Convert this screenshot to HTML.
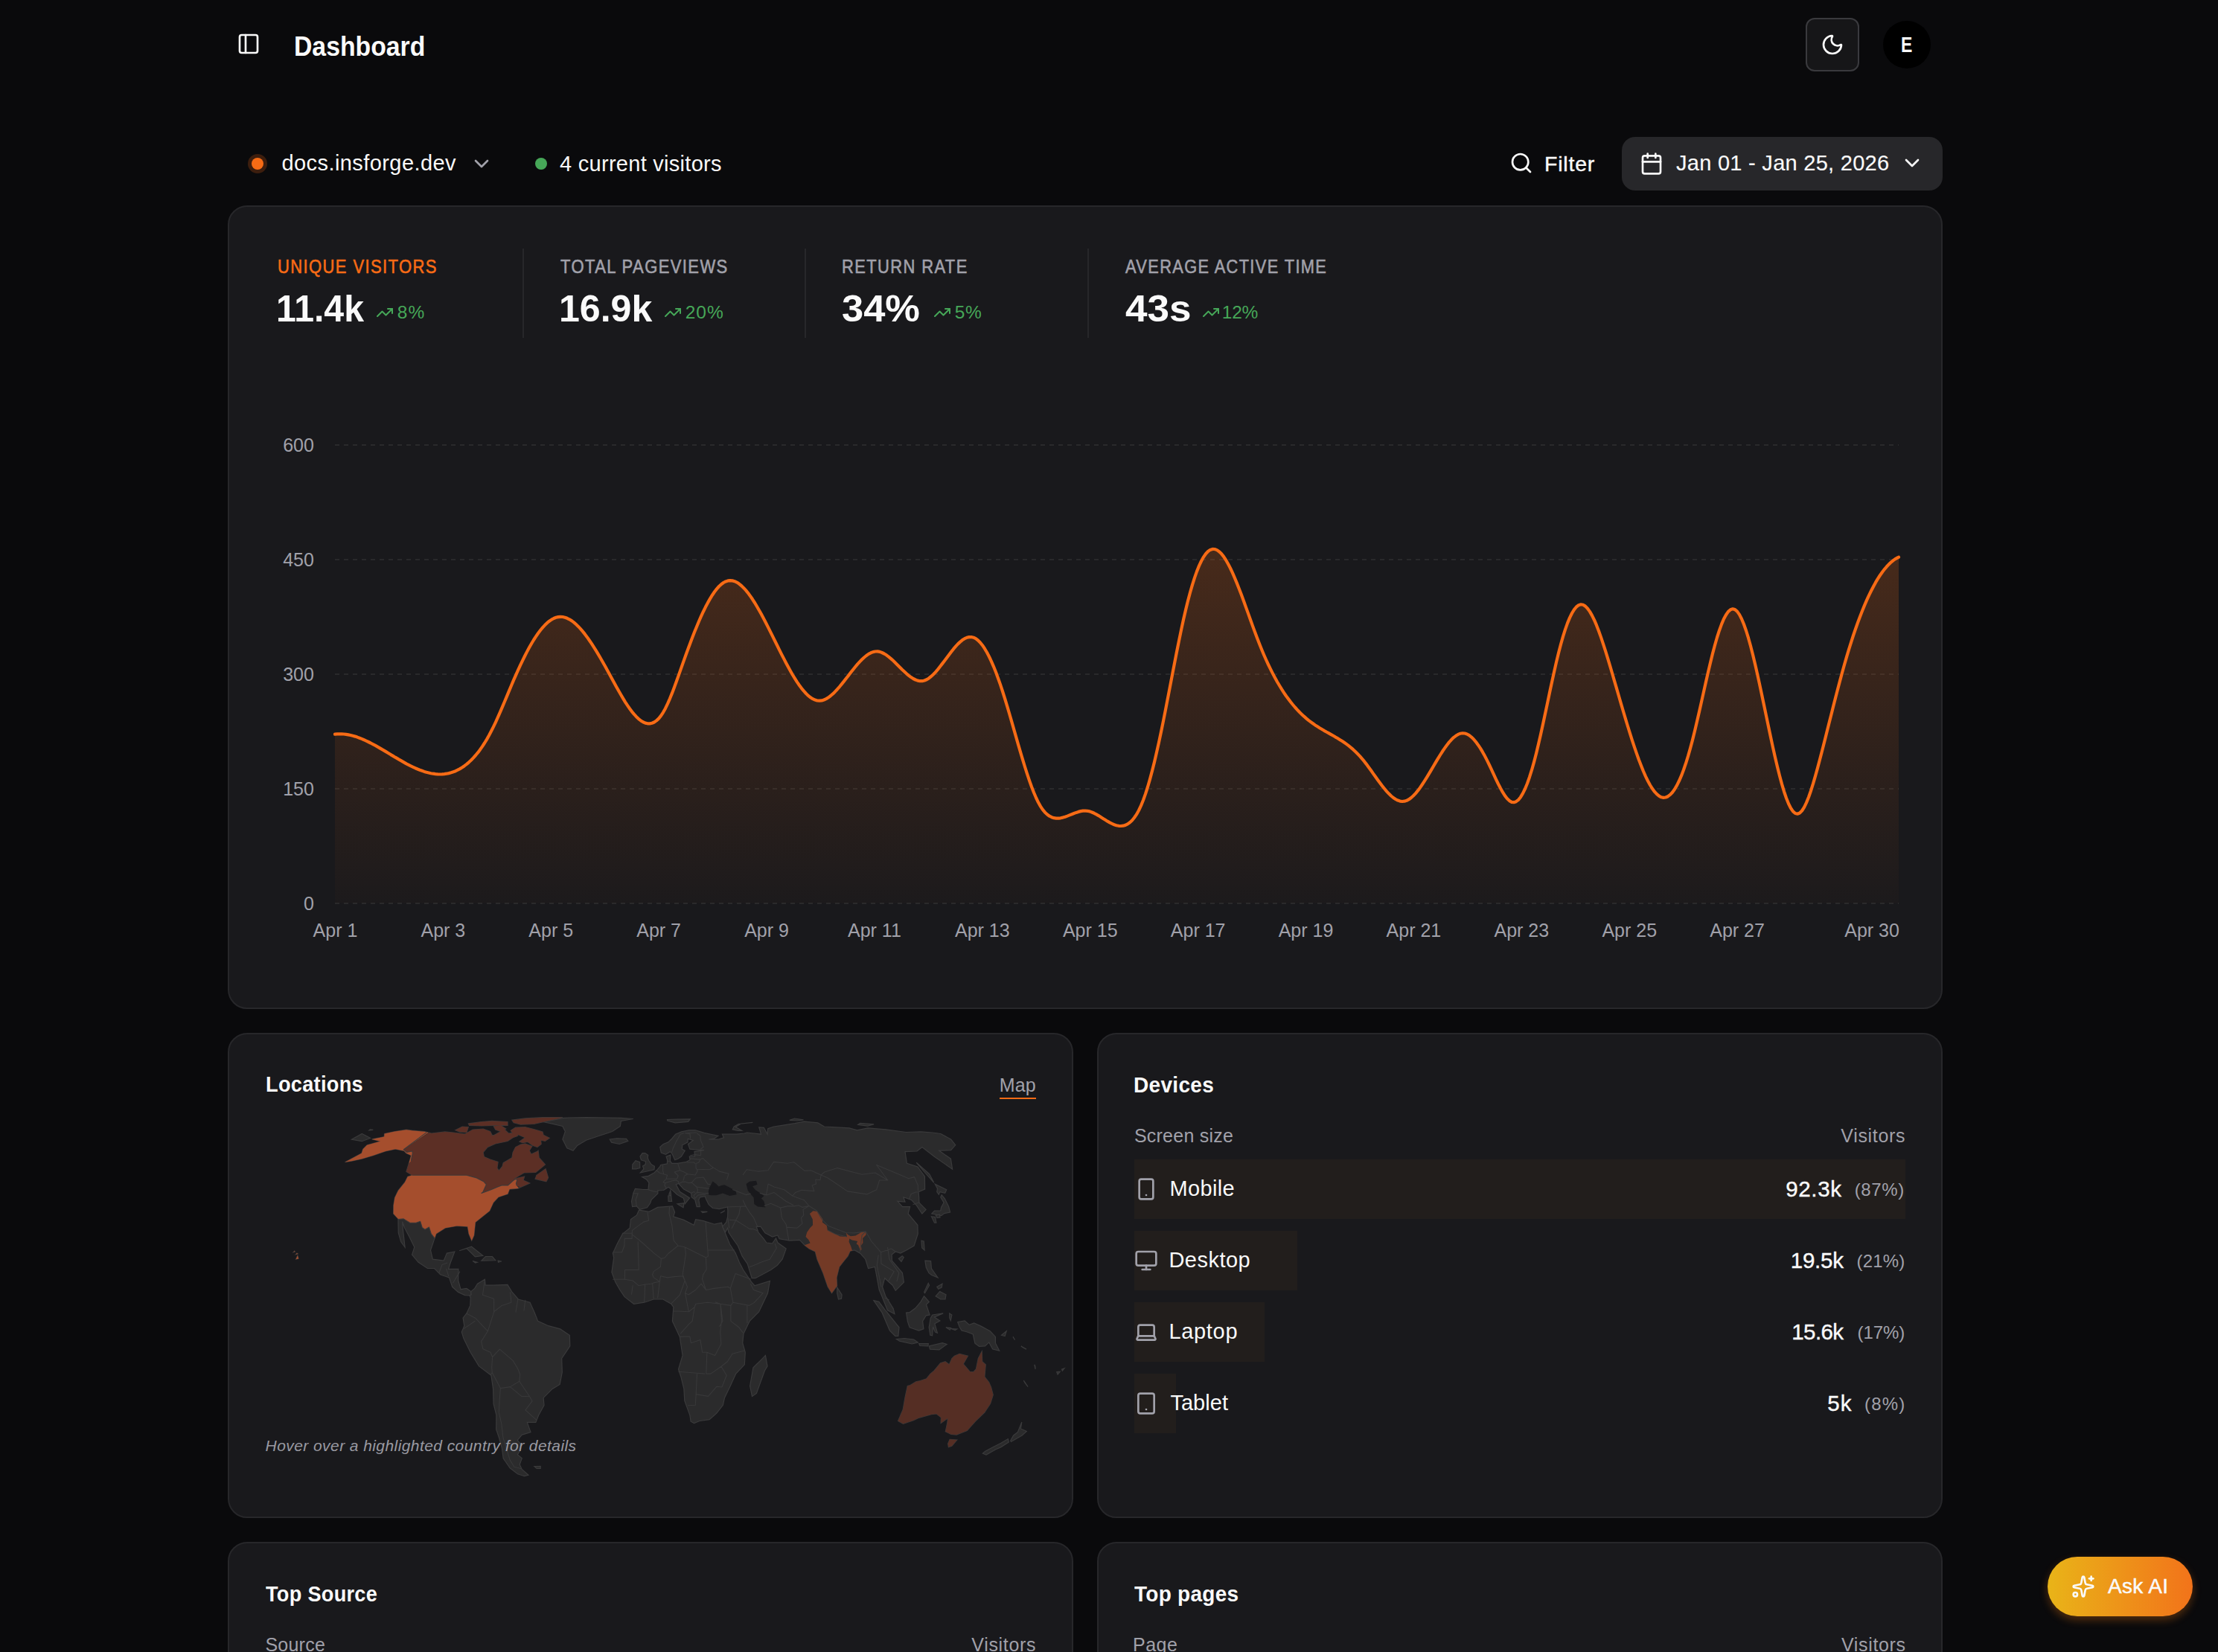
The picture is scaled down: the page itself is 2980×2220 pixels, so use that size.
<!DOCTYPE html>
<html><head><meta charset="utf-8"><title>Dashboard</title>
<style>
html,body{margin:0;padding:0}
body{width:2980px;height:2220px;background:#0a0a0c;position:relative;overflow:hidden;font-family:'Liberation Sans', sans-serif}
.t{position:absolute;white-space:nowrap;line-height:1}
.card{position:absolute;box-sizing:border-box;background:#19191c;border:2px solid #27272a;border-radius:26px}
@media (max-width:2000px){html{zoom:0.5}}
</style></head><body>
<svg style="position:absolute;left:318.00px;top:42.50px;" width="32" height="32" viewBox="0 0 24 24" fill="none" stroke="#fafafa" stroke-width="2" stroke-linecap="round" stroke-linejoin="round"><rect width="18" height="18" x="3" y="3" rx="2"/><path d="M9 3v18"/></svg>
<div style="position:absolute;left:2426px;top:24px;width:72px;height:72px;box-sizing:border-box;border:2px solid #3a3a3e;background:#161618;border-radius:12px"></div>
<svg style="position:absolute;left:2446.10px;top:43.80px;" width="32" height="32" viewBox="0 0 24 24" fill="none" stroke="#fafafa" stroke-width="2" stroke-linecap="round" stroke-linejoin="round"><path d="M20.985 12.486a9 9 0 1 1-9.473-9.472c.405-.022.617.46.402.803a6 6 0 0 0 8.268 8.268c.344-.215.825-.004.803.401"/></svg>
<div style="position:absolute;left:2530px;top:28px;width:64px;height:64px;border-radius:50%;background:#000"></div>
<div style="position:absolute;left:333px;top:207px;width:26px;height:26px;border-radius:50%;background:rgba(247,107,21,0.22)"></div>
<div style="position:absolute;left:338px;top:212px;width:16px;height:16px;border-radius:50%;background:#f76b15"></div>
<svg style="position:absolute;left:631.10px;top:203.80px;" width="32" height="32" viewBox="0 0 24 24" fill="none" stroke="#a1a1aa" stroke-width="2" stroke-linecap="round" stroke-linejoin="round"><path d="m6 9 6 6 6-6"/></svg>
<div style="position:absolute;left:719px;top:212px;width:16px;height:16px;border-radius:50%;background:#46a758"></div>
<svg style="position:absolute;left:2027.50px;top:203.30px;" width="32" height="32" viewBox="0 0 24 24" fill="none" stroke="#fafafa" stroke-width="2" stroke-linecap="round" stroke-linejoin="round"><path d="m21 21-4.34-4.34"/><circle cx="11" cy="11" r="8"/></svg>
<div style="position:absolute;left:2179px;top:184px;width:431px;height:72px;background:#27272a;border-radius:18px"></div>
<svg style="position:absolute;left:2202.80px;top:204.10px;" width="32" height="32" viewBox="0 0 24 24" fill="none" stroke="#fafafa" stroke-width="2" stroke-linecap="round" stroke-linejoin="round"><path d="M8 2v4"/><path d="M16 2v4"/><rect width="18" height="18" x="3" y="4" rx="2"/><path d="M3 10h18"/></svg>
<svg style="position:absolute;left:2553.30px;top:203.30px;" width="32" height="32" viewBox="0 0 24 24" fill="none" stroke="#fafafa" stroke-width="2" stroke-linecap="round" stroke-linejoin="round"><path d="m6 9 6 6 6-6"/></svg>
<div class=card style="left:306px;top:276px;width:2304px;height:1080px"></div>
<div style="position:absolute;left:702px;top:334px;width:2px;height:120px;background:#27272a"></div>
<div style="position:absolute;left:1081px;top:334px;width:2px;height:120px;background:#27272a"></div>
<div style="position:absolute;left:1461px;top:334px;width:2px;height:120px;background:#27272a"></div>
<svg style="position:absolute;left:505.00px;top:408.00px;" width="24" height="24" viewBox="0 0 24 24" fill="none" stroke="#46a758" stroke-width="2" stroke-linecap="round" stroke-linejoin="round"><path d="M16 7h6v6"/><path d="m22 7-8.5 8.5-5-5L2 17"/></svg>
<svg style="position:absolute;left:892.00px;top:408.00px;" width="24" height="24" viewBox="0 0 24 24" fill="none" stroke="#46a758" stroke-width="2" stroke-linecap="round" stroke-linejoin="round"><path d="M16 7h6v6"/><path d="m22 7-8.5 8.5-5-5L2 17"/></svg>
<svg style="position:absolute;left:1254.00px;top:408.00px;" width="24" height="24" viewBox="0 0 24 24" fill="none" stroke="#46a758" stroke-width="2" stroke-linecap="round" stroke-linejoin="round"><path d="M16 7h6v6"/><path d="m22 7-8.5 8.5-5-5L2 17"/></svg>
<svg style="position:absolute;left:1615.30px;top:408.00px;" width="24" height="24" viewBox="0 0 24 24" fill="none" stroke="#46a758" stroke-width="2" stroke-linecap="round" stroke-linejoin="round"><path d="M16 7h6v6"/><path d="m22 7-8.5 8.5-5-5L2 17"/></svg>
<svg style="position:absolute;left:0;top:0" width="2980" height="1400" viewBox="0 0 2980 1400">
<defs><linearGradient id="ag" gradientUnits="userSpaceOnUse" x1="0" y1="737" x2="0" y2="1214"><stop offset="0" stop-color="#f76b15" stop-opacity="0.21"/><stop offset="1" stop-color="#f76b15" stop-opacity="0.015"/></linearGradient></defs>
<line x1="450" x2="2551" y1="598" y2="598" stroke="#29292b" stroke-width="2" stroke-dasharray="6 6"/>
<line x1="450" x2="2551" y1="752" y2="752" stroke="#29292b" stroke-width="2" stroke-dasharray="6 6"/>
<line x1="450" x2="2551" y1="906" y2="906" stroke="#29292b" stroke-width="2" stroke-dasharray="6 6"/>
<line x1="450" x2="2551" y1="1060" y2="1060" stroke="#29292b" stroke-width="2" stroke-dasharray="6 6"/>
<line x1="450" x2="2551" y1="1214" y2="1214" stroke="#29292b" stroke-width="2" stroke-dasharray="6 6"/>
<path d="M450.0,986.7 L453.0,986.4 L456.0,986.3 L459.0,986.3 L462.0,986.5 L465.0,986.9 L468.0,987.4 L471.0,988.0 L474.0,988.8 L477.0,989.6 L480.0,990.6 L483.0,991.7 L486.0,992.9 L489.0,994.2 L492.0,995.6 L495.0,997.0 L498.0,998.5 L501.0,1000.1 L504.0,1001.7 L507.0,1003.4 L510.0,1005.1 L513.0,1006.9 L516.0,1008.6 L519.0,1010.4 L522.0,1012.2 L525.0,1014.1 L528.0,1015.9 L531.0,1017.7 L534.0,1019.4 L537.0,1021.2 L540.0,1022.9 L543.0,1024.6 L546.0,1026.3 L549.0,1027.8 L552.0,1029.4 L555.0,1030.8 L558.0,1032.2 L561.0,1033.5 L564.0,1034.7 L567.0,1035.8 L570.0,1036.9 L573.0,1037.8 L576.0,1038.5 L579.0,1039.2 L582.0,1039.7 L585.0,1040.1 L588.0,1040.4 L591.0,1040.5 L594.0,1040.4 L597.0,1040.1 L600.0,1039.7 L603.0,1039.1 L606.0,1038.3 L609.0,1037.3 L612.0,1036.2 L615.0,1034.7 L618.0,1033.1 L621.0,1031.3 L624.0,1029.2 L627.0,1026.9 L630.0,1024.3 L633.0,1021.5 L636.0,1018.4 L639.0,1015.0 L642.0,1011.4 L645.0,1007.4 L648.0,1003.1 L651.0,998.5 L654.0,993.6 L657.0,988.3 L660.0,982.6 L663.0,976.6 L666.0,970.3 L669.0,963.7 L672.0,956.8 L675.0,949.8 L678.0,942.7 L681.0,935.6 L684.0,928.4 L687.0,921.2 L690.0,914.2 L693.0,907.3 L696.0,900.6 L699.0,894.1 L702.0,887.8 L705.0,881.7 L708.0,875.9 L711.0,870.3 L714.0,865.0 L717.0,860.0 L720.0,855.4 L723.0,851.0 L726.0,847.0 L729.0,843.4 L732.0,840.1 L735.0,837.2 L738.0,834.7 L741.0,832.6 L744.0,831.0 L747.0,829.8 L750.0,829.1 L753.0,828.8 L756.0,829.0 L759.0,829.7 L762.0,830.8 L765.0,832.3 L768.0,834.1 L771.0,836.4 L774.0,839.0 L777.0,841.9 L780.0,845.1 L783.0,848.6 L786.0,852.4 L789.0,856.4 L792.0,860.7 L795.0,865.1 L798.0,869.8 L801.0,874.6 L804.0,879.6 L807.0,884.8 L810.0,890.0 L813.0,895.3 L816.0,900.8 L819.0,906.2 L822.0,911.7 L825.0,917.2 L828.0,922.7 L831.0,928.1 L834.0,933.3 L837.0,938.4 L840.0,943.3 L843.0,947.9 L846.0,952.2 L849.0,956.3 L852.0,959.9 L855.0,963.2 L858.0,966.1 L861.0,968.4 L864.0,970.3 L867.0,971.6 L870.0,972.3 L873.0,972.4 L876.0,971.8 L879.0,970.5 L882.0,968.4 L885.0,965.6 L888.0,961.9 L891.0,957.3 L894.0,951.9 L897.0,945.6 L900.0,938.8 L903.0,931.4 L906.0,923.5 L909.0,915.3 L912.0,906.9 L915.0,898.4 L918.0,889.9 L921.0,881.5 L924.0,873.3 L927.0,865.2 L930.0,857.3 L933.0,849.6 L936.0,842.2 L939.0,835.0 L942.0,828.2 L945.0,821.7 L948.0,815.6 L951.0,809.9 L954.0,804.6 L957.0,799.7 L960.0,795.3 L963.0,791.4 L966.0,788.0 L969.0,785.2 L972.0,783.0 L975.0,781.4 L978.0,780.4 L981.0,780.1 L984.0,780.4 L987.0,781.2 L990.0,782.6 L993.0,784.6 L996.0,787.0 L999.0,789.9 L1002.0,793.2 L1005.0,796.8 L1008.0,800.9 L1011.0,805.3 L1014.0,810.0 L1017.0,815.0 L1020.0,820.2 L1023.0,825.6 L1026.0,831.2 L1029.0,837.0 L1032.0,842.9 L1035.0,848.9 L1038.0,854.9 L1041.0,861.0 L1044.0,867.0 L1047.0,873.1 L1050.0,879.1 L1053.0,884.9 L1056.0,890.7 L1059.0,896.3 L1062.0,901.7 L1065.0,907.0 L1068.0,911.9 L1071.0,916.6 L1074.0,921.0 L1077.0,925.1 L1080.0,928.7 L1083.0,932.0 L1086.0,934.9 L1089.0,937.3 L1092.0,939.2 L1095.0,940.6 L1098.0,941.5 L1101.0,941.7 L1104.0,941.4 L1107.0,940.5 L1110.0,939.1 L1113.0,937.3 L1116.0,935.0 L1119.0,932.4 L1122.0,929.4 L1125.0,926.2 L1128.0,922.8 L1131.0,919.1 L1134.0,915.4 L1137.0,911.5 L1140.0,907.7 L1143.0,903.8 L1146.0,900.0 L1149.0,896.3 L1152.0,892.7 L1155.0,889.4 L1158.0,886.3 L1161.0,883.5 L1164.0,881.0 L1167.0,878.9 L1170.0,877.3 L1173.0,876.1 L1176.0,875.5 L1179.0,875.4 L1182.0,875.9 L1185.0,877.0 L1188.0,878.5 L1191.0,880.3 L1194.0,882.6 L1197.0,885.1 L1200.0,887.8 L1203.0,890.7 L1206.0,893.7 L1209.0,896.7 L1212.0,899.7 L1215.0,902.5 L1218.0,905.3 L1221.0,907.8 L1224.0,910.1 L1227.0,912.0 L1230.0,913.5 L1233.0,914.6 L1236.0,915.2 L1239.0,915.2 L1242.0,914.5 L1245.0,913.3 L1248.0,911.4 L1251.0,909.0 L1254.0,906.2 L1257.0,903.1 L1260.0,899.6 L1263.0,895.8 L1266.0,891.9 L1269.0,887.9 L1272.0,883.9 L1275.0,879.9 L1278.0,876.0 L1281.0,872.2 L1284.0,868.7 L1287.0,865.4 L1290.0,862.6 L1293.0,860.1 L1296.0,858.2 L1299.0,856.8 L1302.0,856.1 L1305.0,856.0 L1308.0,856.7 L1311.0,858.2 L1314.0,860.5 L1317.0,863.5 L1320.0,867.2 L1323.0,871.7 L1326.0,876.8 L1329.0,882.5 L1332.0,888.9 L1335.0,895.8 L1338.0,903.3 L1341.0,911.4 L1344.0,919.9 L1347.0,929.0 L1350.0,938.5 L1353.0,948.4 L1356.0,958.5 L1359.0,968.9 L1362.0,979.4 L1365.0,989.9 L1368.0,1000.3 L1371.0,1010.6 L1374.0,1020.7 L1377.0,1030.5 L1380.0,1039.9 L1383.0,1048.9 L1386.0,1057.3 L1389.0,1065.0 L1392.0,1072.0 L1395.0,1078.3 L1398.0,1083.6 L1401.0,1088.1 L1404.0,1091.7 L1407.0,1094.5 L1410.0,1096.7 L1413.0,1098.2 L1416.0,1099.2 L1419.0,1099.6 L1422.0,1099.7 L1425.0,1099.3 L1428.0,1098.6 L1431.0,1097.7 L1434.0,1096.6 L1437.0,1095.4 L1440.0,1094.2 L1443.0,1093.0 L1446.0,1091.9 L1449.0,1090.9 L1452.0,1090.1 L1455.0,1089.6 L1458.0,1089.5 L1461.0,1089.8 L1464.0,1090.4 L1467.0,1091.5 L1470.0,1092.8 L1473.0,1094.4 L1476.0,1096.1 L1479.0,1098.0 L1482.0,1099.9 L1485.0,1101.8 L1488.0,1103.7 L1491.0,1105.4 L1494.0,1106.9 L1497.0,1108.2 L1500.0,1109.2 L1503.0,1109.8 L1506.0,1110.0 L1509.0,1109.7 L1512.0,1108.9 L1515.0,1107.4 L1518.0,1105.3 L1521.0,1102.5 L1524.0,1098.8 L1527.0,1094.4 L1530.0,1089.0 L1533.0,1082.6 L1536.0,1075.3 L1539.0,1066.9 L1542.0,1057.5 L1545.0,1047.1 L1548.0,1035.9 L1551.0,1023.9 L1554.0,1011.1 L1557.0,997.6 L1560.0,983.5 L1563.0,968.8 L1566.0,953.7 L1569.0,938.2 L1572.0,922.6 L1575.0,906.9 L1578.0,891.4 L1581.0,876.0 L1584.0,861.1 L1587.0,846.6 L1590.0,832.8 L1593.0,819.7 L1596.0,807.5 L1599.0,796.2 L1602.0,785.8 L1605.0,776.4 L1608.0,767.9 L1611.0,760.4 L1614.0,754.0 L1617.0,748.6 L1620.0,744.2 L1623.0,741.0 L1626.0,738.9 L1629.0,737.9 L1632.0,738.0 L1635.0,739.1 L1638.0,741.2 L1641.0,744.1 L1644.0,747.9 L1647.0,752.5 L1650.0,757.7 L1653.0,763.5 L1656.0,769.9 L1659.0,776.8 L1662.0,784.1 L1665.0,791.7 L1668.0,799.6 L1671.0,807.8 L1674.0,816.1 L1677.0,824.4 L1680.0,832.8 L1683.0,841.1 L1686.0,849.3 L1689.0,857.3 L1692.0,865.1 L1695.0,872.5 L1698.0,879.7 L1701.0,886.5 L1704.0,893.0 L1707.0,899.2 L1710.0,905.1 L1713.0,910.8 L1716.0,916.2 L1719.0,921.3 L1722.0,926.2 L1725.0,930.8 L1728.0,935.2 L1731.0,939.3 L1734.0,943.3 L1737.0,947.0 L1740.0,950.5 L1743.0,953.8 L1746.0,957.0 L1749.0,959.9 L1752.0,962.7 L1755.0,965.3 L1758.0,967.8 L1761.0,970.1 L1764.0,972.3 L1767.0,974.4 L1770.0,976.3 L1773.0,978.2 L1776.0,980.0 L1779.0,981.8 L1782.0,983.5 L1785.0,985.1 L1788.0,986.8 L1791.0,988.5 L1794.0,990.3 L1797.0,992.0 L1800.0,993.9 L1803.0,995.8 L1806.0,997.8 L1809.0,999.9 L1812.0,1002.2 L1815.0,1004.6 L1818.0,1007.2 L1821.0,1010.0 L1824.0,1013.0 L1827.0,1016.1 L1830.0,1019.6 L1833.0,1023.2 L1836.0,1027.1 L1839.0,1031.2 L1842.0,1035.3 L1845.0,1039.6 L1848.0,1043.8 L1851.0,1048.0 L1854.0,1052.1 L1857.0,1056.1 L1860.0,1059.8 L1863.0,1063.4 L1866.0,1066.6 L1869.0,1069.5 L1872.0,1072.0 L1875.0,1074.0 L1878.0,1075.6 L1881.0,1076.6 L1884.0,1077.0 L1887.0,1076.7 L1890.0,1075.8 L1893.0,1074.2 L1896.0,1072.0 L1899.0,1069.3 L1902.0,1066.1 L1905.0,1062.4 L1908.0,1058.4 L1911.0,1054.0 L1914.0,1049.4 L1917.0,1044.6 L1920.0,1039.6 L1923.0,1034.6 L1926.0,1029.5 L1929.0,1024.4 L1932.0,1019.4 L1935.0,1014.5 L1938.0,1009.8 L1941.0,1005.4 L1944.0,1001.2 L1947.0,997.4 L1950.0,994.1 L1953.0,991.1 L1956.0,988.8 L1959.0,986.9 L1962.0,985.8 L1965.0,985.3 L1968.0,985.5 L1971.0,986.5 L1974.0,988.2 L1977.0,990.6 L1980.0,993.5 L1983.0,997.1 L1986.0,1001.2 L1989.0,1005.7 L1992.0,1010.7 L1995.0,1016.1 L1998.0,1021.9 L2001.0,1028.0 L2004.0,1034.4 L2007.0,1040.8 L2010.0,1047.3 L2013.0,1053.5 L2016.0,1059.3 L2019.0,1064.7 L2022.0,1069.4 L2025.0,1073.2 L2028.0,1076.1 L2031.0,1077.8 L2034.0,1078.2 L2037.0,1077.2 L2040.0,1074.9 L2043.0,1071.2 L2046.0,1066.2 L2049.0,1060.0 L2052.0,1052.7 L2055.0,1044.2 L2058.0,1034.7 L2061.0,1024.1 L2064.0,1012.6 L2067.0,1000.1 L2070.0,987.0 L2073.0,973.3 L2076.0,959.3 L2079.0,945.1 L2082.0,930.8 L2085.0,916.8 L2088.0,903.1 L2091.0,889.9 L2094.0,877.5 L2097.0,866.0 L2100.0,855.4 L2103.0,845.9 L2106.0,837.4 L2109.0,830.1 L2112.0,824.0 L2115.0,819.1 L2118.0,815.5 L2121.0,813.2 L2124.0,812.3 L2127.0,812.8 L2130.0,814.6 L2133.0,817.7 L2136.0,821.9 L2139.0,827.1 L2142.0,833.2 L2145.0,840.2 L2148.0,848.0 L2151.0,856.4 L2154.0,865.3 L2157.0,874.7 L2160.0,884.4 L2163.0,894.4 L2166.0,904.5 L2169.0,914.8 L2172.0,925.1 L2175.0,935.5 L2178.0,945.8 L2181.0,956.0 L2184.0,966.1 L2187.0,976.0 L2190.0,985.7 L2193.0,995.1 L2196.0,1004.2 L2199.0,1012.9 L2202.0,1021.3 L2205.0,1029.1 L2208.0,1036.5 L2211.0,1043.3 L2214.0,1049.5 L2217.0,1055.0 L2220.0,1059.8 L2223.0,1063.9 L2226.0,1067.2 L2229.0,1069.7 L2232.0,1071.3 L2235.0,1071.9 L2238.0,1071.5 L2241.0,1070.2 L2244.0,1067.9 L2247.0,1064.7 L2250.0,1060.5 L2253.0,1055.4 L2256.0,1049.3 L2259.0,1042.4 L2262.0,1034.5 L2265.0,1025.8 L2268.0,1016.2 L2271.0,1005.7 L2274.0,994.4 L2277.0,982.3 L2280.0,969.6 L2283.0,956.5 L2286.0,943.1 L2289.0,929.6 L2292.0,916.2 L2295.0,903.1 L2298.0,890.4 L2301.0,878.3 L2304.0,867.0 L2307.0,856.5 L2310.0,847.2 L2313.0,838.9 L2316.0,831.8 L2319.0,826.2 L2322.0,821.9 L2325.0,819.3 L2328.0,818.3 L2331.0,819.1 L2334.0,821.6 L2337.0,825.9 L2340.0,831.7 L2343.0,839.0 L2346.0,847.5 L2349.0,857.2 L2352.0,868.0 L2355.0,879.7 L2358.0,892.2 L2361.0,905.4 L2364.0,919.1 L2367.0,933.2 L2370.0,947.5 L2373.0,961.9 L2376.0,976.3 L2379.0,990.5 L2382.0,1004.4 L2385.0,1017.8 L2388.0,1030.5 L2391.0,1042.5 L2394.0,1053.6 L2397.0,1063.7 L2400.0,1072.5 L2403.0,1080.0 L2406.0,1086.0 L2409.0,1090.4 L2412.0,1093.0 L2415.0,1093.7 L2418.0,1092.5 L2421.0,1089.5 L2424.0,1084.8 L2427.0,1078.6 L2430.0,1071.2 L2433.0,1062.7 L2436.0,1053.2 L2439.0,1042.9 L2442.0,1032.1 L2445.0,1020.8 L2448.0,1009.2 L2451.0,997.4 L2454.0,985.5 L2457.0,973.6 L2460.0,961.7 L2463.0,949.8 L2466.0,938.1 L2469.0,926.5 L2472.0,915.1 L2475.0,904.0 L2478.0,893.2 L2481.0,882.9 L2484.0,872.9 L2487.0,863.3 L2490.0,854.0 L2493.0,845.2 L2496.0,836.7 L2499.0,828.7 L2502.0,821.0 L2505.0,813.6 L2508.0,806.7 L2511.0,800.1 L2514.0,794.0 L2517.0,788.2 L2520.0,782.7 L2523.0,777.7 L2526.0,773.0 L2529.0,768.7 L2532.0,764.8 L2535.0,761.3 L2538.0,758.1 L2541.0,755.3 L2544.0,752.9 L2547.0,750.8 L2550.0,749.1 L2551.0,748.7 L2551,1214 L450,1214 Z" fill="url(#ag)"/>
<path d="M450.0,986.7 L453.0,986.4 L456.0,986.3 L459.0,986.3 L462.0,986.5 L465.0,986.9 L468.0,987.4 L471.0,988.0 L474.0,988.8 L477.0,989.6 L480.0,990.6 L483.0,991.7 L486.0,992.9 L489.0,994.2 L492.0,995.6 L495.0,997.0 L498.0,998.5 L501.0,1000.1 L504.0,1001.7 L507.0,1003.4 L510.0,1005.1 L513.0,1006.9 L516.0,1008.6 L519.0,1010.4 L522.0,1012.2 L525.0,1014.1 L528.0,1015.9 L531.0,1017.7 L534.0,1019.4 L537.0,1021.2 L540.0,1022.9 L543.0,1024.6 L546.0,1026.3 L549.0,1027.8 L552.0,1029.4 L555.0,1030.8 L558.0,1032.2 L561.0,1033.5 L564.0,1034.7 L567.0,1035.8 L570.0,1036.9 L573.0,1037.8 L576.0,1038.5 L579.0,1039.2 L582.0,1039.7 L585.0,1040.1 L588.0,1040.4 L591.0,1040.5 L594.0,1040.4 L597.0,1040.1 L600.0,1039.7 L603.0,1039.1 L606.0,1038.3 L609.0,1037.3 L612.0,1036.2 L615.0,1034.7 L618.0,1033.1 L621.0,1031.3 L624.0,1029.2 L627.0,1026.9 L630.0,1024.3 L633.0,1021.5 L636.0,1018.4 L639.0,1015.0 L642.0,1011.4 L645.0,1007.4 L648.0,1003.1 L651.0,998.5 L654.0,993.6 L657.0,988.3 L660.0,982.6 L663.0,976.6 L666.0,970.3 L669.0,963.7 L672.0,956.8 L675.0,949.8 L678.0,942.7 L681.0,935.6 L684.0,928.4 L687.0,921.2 L690.0,914.2 L693.0,907.3 L696.0,900.6 L699.0,894.1 L702.0,887.8 L705.0,881.7 L708.0,875.9 L711.0,870.3 L714.0,865.0 L717.0,860.0 L720.0,855.4 L723.0,851.0 L726.0,847.0 L729.0,843.4 L732.0,840.1 L735.0,837.2 L738.0,834.7 L741.0,832.6 L744.0,831.0 L747.0,829.8 L750.0,829.1 L753.0,828.8 L756.0,829.0 L759.0,829.7 L762.0,830.8 L765.0,832.3 L768.0,834.1 L771.0,836.4 L774.0,839.0 L777.0,841.9 L780.0,845.1 L783.0,848.6 L786.0,852.4 L789.0,856.4 L792.0,860.7 L795.0,865.1 L798.0,869.8 L801.0,874.6 L804.0,879.6 L807.0,884.8 L810.0,890.0 L813.0,895.3 L816.0,900.8 L819.0,906.2 L822.0,911.7 L825.0,917.2 L828.0,922.7 L831.0,928.1 L834.0,933.3 L837.0,938.4 L840.0,943.3 L843.0,947.9 L846.0,952.2 L849.0,956.3 L852.0,959.9 L855.0,963.2 L858.0,966.1 L861.0,968.4 L864.0,970.3 L867.0,971.6 L870.0,972.3 L873.0,972.4 L876.0,971.8 L879.0,970.5 L882.0,968.4 L885.0,965.6 L888.0,961.9 L891.0,957.3 L894.0,951.9 L897.0,945.6 L900.0,938.8 L903.0,931.4 L906.0,923.5 L909.0,915.3 L912.0,906.9 L915.0,898.4 L918.0,889.9 L921.0,881.5 L924.0,873.3 L927.0,865.2 L930.0,857.3 L933.0,849.6 L936.0,842.2 L939.0,835.0 L942.0,828.2 L945.0,821.7 L948.0,815.6 L951.0,809.9 L954.0,804.6 L957.0,799.7 L960.0,795.3 L963.0,791.4 L966.0,788.0 L969.0,785.2 L972.0,783.0 L975.0,781.4 L978.0,780.4 L981.0,780.1 L984.0,780.4 L987.0,781.2 L990.0,782.6 L993.0,784.6 L996.0,787.0 L999.0,789.9 L1002.0,793.2 L1005.0,796.8 L1008.0,800.9 L1011.0,805.3 L1014.0,810.0 L1017.0,815.0 L1020.0,820.2 L1023.0,825.6 L1026.0,831.2 L1029.0,837.0 L1032.0,842.9 L1035.0,848.9 L1038.0,854.9 L1041.0,861.0 L1044.0,867.0 L1047.0,873.1 L1050.0,879.1 L1053.0,884.9 L1056.0,890.7 L1059.0,896.3 L1062.0,901.7 L1065.0,907.0 L1068.0,911.9 L1071.0,916.6 L1074.0,921.0 L1077.0,925.1 L1080.0,928.7 L1083.0,932.0 L1086.0,934.9 L1089.0,937.3 L1092.0,939.2 L1095.0,940.6 L1098.0,941.5 L1101.0,941.7 L1104.0,941.4 L1107.0,940.5 L1110.0,939.1 L1113.0,937.3 L1116.0,935.0 L1119.0,932.4 L1122.0,929.4 L1125.0,926.2 L1128.0,922.8 L1131.0,919.1 L1134.0,915.4 L1137.0,911.5 L1140.0,907.7 L1143.0,903.8 L1146.0,900.0 L1149.0,896.3 L1152.0,892.7 L1155.0,889.4 L1158.0,886.3 L1161.0,883.5 L1164.0,881.0 L1167.0,878.9 L1170.0,877.3 L1173.0,876.1 L1176.0,875.5 L1179.0,875.4 L1182.0,875.9 L1185.0,877.0 L1188.0,878.5 L1191.0,880.3 L1194.0,882.6 L1197.0,885.1 L1200.0,887.8 L1203.0,890.7 L1206.0,893.7 L1209.0,896.7 L1212.0,899.7 L1215.0,902.5 L1218.0,905.3 L1221.0,907.8 L1224.0,910.1 L1227.0,912.0 L1230.0,913.5 L1233.0,914.6 L1236.0,915.2 L1239.0,915.2 L1242.0,914.5 L1245.0,913.3 L1248.0,911.4 L1251.0,909.0 L1254.0,906.2 L1257.0,903.1 L1260.0,899.6 L1263.0,895.8 L1266.0,891.9 L1269.0,887.9 L1272.0,883.9 L1275.0,879.9 L1278.0,876.0 L1281.0,872.2 L1284.0,868.7 L1287.0,865.4 L1290.0,862.6 L1293.0,860.1 L1296.0,858.2 L1299.0,856.8 L1302.0,856.1 L1305.0,856.0 L1308.0,856.7 L1311.0,858.2 L1314.0,860.5 L1317.0,863.5 L1320.0,867.2 L1323.0,871.7 L1326.0,876.8 L1329.0,882.5 L1332.0,888.9 L1335.0,895.8 L1338.0,903.3 L1341.0,911.4 L1344.0,919.9 L1347.0,929.0 L1350.0,938.5 L1353.0,948.4 L1356.0,958.5 L1359.0,968.9 L1362.0,979.4 L1365.0,989.9 L1368.0,1000.3 L1371.0,1010.6 L1374.0,1020.7 L1377.0,1030.5 L1380.0,1039.9 L1383.0,1048.9 L1386.0,1057.3 L1389.0,1065.0 L1392.0,1072.0 L1395.0,1078.3 L1398.0,1083.6 L1401.0,1088.1 L1404.0,1091.7 L1407.0,1094.5 L1410.0,1096.7 L1413.0,1098.2 L1416.0,1099.2 L1419.0,1099.6 L1422.0,1099.7 L1425.0,1099.3 L1428.0,1098.6 L1431.0,1097.7 L1434.0,1096.6 L1437.0,1095.4 L1440.0,1094.2 L1443.0,1093.0 L1446.0,1091.9 L1449.0,1090.9 L1452.0,1090.1 L1455.0,1089.6 L1458.0,1089.5 L1461.0,1089.8 L1464.0,1090.4 L1467.0,1091.5 L1470.0,1092.8 L1473.0,1094.4 L1476.0,1096.1 L1479.0,1098.0 L1482.0,1099.9 L1485.0,1101.8 L1488.0,1103.7 L1491.0,1105.4 L1494.0,1106.9 L1497.0,1108.2 L1500.0,1109.2 L1503.0,1109.8 L1506.0,1110.0 L1509.0,1109.7 L1512.0,1108.9 L1515.0,1107.4 L1518.0,1105.3 L1521.0,1102.5 L1524.0,1098.8 L1527.0,1094.4 L1530.0,1089.0 L1533.0,1082.6 L1536.0,1075.3 L1539.0,1066.9 L1542.0,1057.5 L1545.0,1047.1 L1548.0,1035.9 L1551.0,1023.9 L1554.0,1011.1 L1557.0,997.6 L1560.0,983.5 L1563.0,968.8 L1566.0,953.7 L1569.0,938.2 L1572.0,922.6 L1575.0,906.9 L1578.0,891.4 L1581.0,876.0 L1584.0,861.1 L1587.0,846.6 L1590.0,832.8 L1593.0,819.7 L1596.0,807.5 L1599.0,796.2 L1602.0,785.8 L1605.0,776.4 L1608.0,767.9 L1611.0,760.4 L1614.0,754.0 L1617.0,748.6 L1620.0,744.2 L1623.0,741.0 L1626.0,738.9 L1629.0,737.9 L1632.0,738.0 L1635.0,739.1 L1638.0,741.2 L1641.0,744.1 L1644.0,747.9 L1647.0,752.5 L1650.0,757.7 L1653.0,763.5 L1656.0,769.9 L1659.0,776.8 L1662.0,784.1 L1665.0,791.7 L1668.0,799.6 L1671.0,807.8 L1674.0,816.1 L1677.0,824.4 L1680.0,832.8 L1683.0,841.1 L1686.0,849.3 L1689.0,857.3 L1692.0,865.1 L1695.0,872.5 L1698.0,879.7 L1701.0,886.5 L1704.0,893.0 L1707.0,899.2 L1710.0,905.1 L1713.0,910.8 L1716.0,916.2 L1719.0,921.3 L1722.0,926.2 L1725.0,930.8 L1728.0,935.2 L1731.0,939.3 L1734.0,943.3 L1737.0,947.0 L1740.0,950.5 L1743.0,953.8 L1746.0,957.0 L1749.0,959.9 L1752.0,962.7 L1755.0,965.3 L1758.0,967.8 L1761.0,970.1 L1764.0,972.3 L1767.0,974.4 L1770.0,976.3 L1773.0,978.2 L1776.0,980.0 L1779.0,981.8 L1782.0,983.5 L1785.0,985.1 L1788.0,986.8 L1791.0,988.5 L1794.0,990.3 L1797.0,992.0 L1800.0,993.9 L1803.0,995.8 L1806.0,997.8 L1809.0,999.9 L1812.0,1002.2 L1815.0,1004.6 L1818.0,1007.2 L1821.0,1010.0 L1824.0,1013.0 L1827.0,1016.1 L1830.0,1019.6 L1833.0,1023.2 L1836.0,1027.1 L1839.0,1031.2 L1842.0,1035.3 L1845.0,1039.6 L1848.0,1043.8 L1851.0,1048.0 L1854.0,1052.1 L1857.0,1056.1 L1860.0,1059.8 L1863.0,1063.4 L1866.0,1066.6 L1869.0,1069.5 L1872.0,1072.0 L1875.0,1074.0 L1878.0,1075.6 L1881.0,1076.6 L1884.0,1077.0 L1887.0,1076.7 L1890.0,1075.8 L1893.0,1074.2 L1896.0,1072.0 L1899.0,1069.3 L1902.0,1066.1 L1905.0,1062.4 L1908.0,1058.4 L1911.0,1054.0 L1914.0,1049.4 L1917.0,1044.6 L1920.0,1039.6 L1923.0,1034.6 L1926.0,1029.5 L1929.0,1024.4 L1932.0,1019.4 L1935.0,1014.5 L1938.0,1009.8 L1941.0,1005.4 L1944.0,1001.2 L1947.0,997.4 L1950.0,994.1 L1953.0,991.1 L1956.0,988.8 L1959.0,986.9 L1962.0,985.8 L1965.0,985.3 L1968.0,985.5 L1971.0,986.5 L1974.0,988.2 L1977.0,990.6 L1980.0,993.5 L1983.0,997.1 L1986.0,1001.2 L1989.0,1005.7 L1992.0,1010.7 L1995.0,1016.1 L1998.0,1021.9 L2001.0,1028.0 L2004.0,1034.4 L2007.0,1040.8 L2010.0,1047.3 L2013.0,1053.5 L2016.0,1059.3 L2019.0,1064.7 L2022.0,1069.4 L2025.0,1073.2 L2028.0,1076.1 L2031.0,1077.8 L2034.0,1078.2 L2037.0,1077.2 L2040.0,1074.9 L2043.0,1071.2 L2046.0,1066.2 L2049.0,1060.0 L2052.0,1052.7 L2055.0,1044.2 L2058.0,1034.7 L2061.0,1024.1 L2064.0,1012.6 L2067.0,1000.1 L2070.0,987.0 L2073.0,973.3 L2076.0,959.3 L2079.0,945.1 L2082.0,930.8 L2085.0,916.8 L2088.0,903.1 L2091.0,889.9 L2094.0,877.5 L2097.0,866.0 L2100.0,855.4 L2103.0,845.9 L2106.0,837.4 L2109.0,830.1 L2112.0,824.0 L2115.0,819.1 L2118.0,815.5 L2121.0,813.2 L2124.0,812.3 L2127.0,812.8 L2130.0,814.6 L2133.0,817.7 L2136.0,821.9 L2139.0,827.1 L2142.0,833.2 L2145.0,840.2 L2148.0,848.0 L2151.0,856.4 L2154.0,865.3 L2157.0,874.7 L2160.0,884.4 L2163.0,894.4 L2166.0,904.5 L2169.0,914.8 L2172.0,925.1 L2175.0,935.5 L2178.0,945.8 L2181.0,956.0 L2184.0,966.1 L2187.0,976.0 L2190.0,985.7 L2193.0,995.1 L2196.0,1004.2 L2199.0,1012.9 L2202.0,1021.3 L2205.0,1029.1 L2208.0,1036.5 L2211.0,1043.3 L2214.0,1049.5 L2217.0,1055.0 L2220.0,1059.8 L2223.0,1063.9 L2226.0,1067.2 L2229.0,1069.7 L2232.0,1071.3 L2235.0,1071.9 L2238.0,1071.5 L2241.0,1070.2 L2244.0,1067.9 L2247.0,1064.7 L2250.0,1060.5 L2253.0,1055.4 L2256.0,1049.3 L2259.0,1042.4 L2262.0,1034.5 L2265.0,1025.8 L2268.0,1016.2 L2271.0,1005.7 L2274.0,994.4 L2277.0,982.3 L2280.0,969.6 L2283.0,956.5 L2286.0,943.1 L2289.0,929.6 L2292.0,916.2 L2295.0,903.1 L2298.0,890.4 L2301.0,878.3 L2304.0,867.0 L2307.0,856.5 L2310.0,847.2 L2313.0,838.9 L2316.0,831.8 L2319.0,826.2 L2322.0,821.9 L2325.0,819.3 L2328.0,818.3 L2331.0,819.1 L2334.0,821.6 L2337.0,825.9 L2340.0,831.7 L2343.0,839.0 L2346.0,847.5 L2349.0,857.2 L2352.0,868.0 L2355.0,879.7 L2358.0,892.2 L2361.0,905.4 L2364.0,919.1 L2367.0,933.2 L2370.0,947.5 L2373.0,961.9 L2376.0,976.3 L2379.0,990.5 L2382.0,1004.4 L2385.0,1017.8 L2388.0,1030.5 L2391.0,1042.5 L2394.0,1053.6 L2397.0,1063.7 L2400.0,1072.5 L2403.0,1080.0 L2406.0,1086.0 L2409.0,1090.4 L2412.0,1093.0 L2415.0,1093.7 L2418.0,1092.5 L2421.0,1089.5 L2424.0,1084.8 L2427.0,1078.6 L2430.0,1071.2 L2433.0,1062.7 L2436.0,1053.2 L2439.0,1042.9 L2442.0,1032.1 L2445.0,1020.8 L2448.0,1009.2 L2451.0,997.4 L2454.0,985.5 L2457.0,973.6 L2460.0,961.7 L2463.0,949.8 L2466.0,938.1 L2469.0,926.5 L2472.0,915.1 L2475.0,904.0 L2478.0,893.2 L2481.0,882.9 L2484.0,872.9 L2487.0,863.3 L2490.0,854.0 L2493.0,845.2 L2496.0,836.7 L2499.0,828.7 L2502.0,821.0 L2505.0,813.6 L2508.0,806.7 L2511.0,800.1 L2514.0,794.0 L2517.0,788.2 L2520.0,782.7 L2523.0,777.7 L2526.0,773.0 L2529.0,768.7 L2532.0,764.8 L2535.0,761.3 L2538.0,758.1 L2541.0,755.3 L2544.0,752.9 L2547.0,750.8 L2550.0,749.1 L2551.0,748.7" fill="none" stroke="#f76b15" stroke-width="4.2" stroke-linejoin="round" stroke-linecap="round"/>
</svg>
<div class=card style="left:306px;top:1388px;width:1136px;height:652px"></div>
<div class=card style="left:1474px;top:1388px;width:1136px;height:652px"></div>
<svg style="position:absolute;left:0;top:0" width="2980" height="2220" viewBox="0 0 2980 2220">
<defs>
<clipPath id="na"><path d="M463.5,1561.7 L485.9,1549.8 L487.6,1544.2 L493.1,1538.8 L511.1,1533.7 L499.7,1530.9 L516.2,1527.6 L516.5,1523.5 L530.3,1520.5 L545.9,1518.2 L553.7,1519.2 L570.4,1520.7 L579.8,1523.0 L597.9,1520.9 L609.2,1522.0 L625.9,1524.2 L639.8,1525.3 L663.3,1525.7 L677.8,1517.8 L683.3,1523.0 L693.4,1521.3 L695.5,1526.4 L689.1,1528.7 L682.0,1533.4 L665.6,1536.9 L655.1,1541.6 L649.2,1548.6 L650.4,1554.5 L658.6,1558.0 L669.1,1561.5 L668.0,1569.7 L670.3,1573.2 L675.0,1567.4 L676.2,1562.7 L687.9,1555.7 L689.1,1548.6 L692.6,1541.6 L699.6,1538.1 L705.5,1536.9 L714.9,1540.4 L711.3,1546.3 L713.7,1551.0 L721.9,1547.4 L723.1,1546.3 L724.3,1555.7 L732.5,1565.0 L719.8,1575.4 L704.0,1576.0 L690.0,1584.3 L704.6,1581.0 L703.1,1586.0 L711.8,1590.1 L695.8,1597.1 L684.6,1598.1 L682.2,1604.5 L669.6,1608.8 L662.9,1616.1 L657.8,1627.2 L638.7,1642.5 L636.9,1660.0 L633.7,1667.2 L629.9,1658.1 L628.2,1648.3 L613.7,1647.5 L598.2,1650.2 L586.0,1658.1 L578.5,1680.0 L581.3,1692.2 L596.2,1694.2 L600.4,1684.1 L610.8,1682.0 L604.7,1698.3 L602.6,1705.3 L615.9,1705.3 L615.7,1721.0 L619.0,1732.7 L626.9,1731.4 L632.8,1735.6 L633.2,1739.8 L630.9,1741.0 L624.7,1740.6 L615.6,1736.4 L607.7,1729.3 L603.5,1716.9 L591.6,1712.7 L583.6,1704.5 L574.4,1704.5 L562.1,1696.3 L553.6,1686.1 L556.8,1676.0 L549.9,1662.0 L543.7,1650.2 L540.6,1641.7 L541.4,1652.2 L544.1,1676.0 L538.7,1668.8 L535.3,1656.9 L535.0,1642.5 L535.0,1637.9 L528.6,1631.0 L528.7,1619.8 L530.4,1609.5 L535.0,1599.9 L544.0,1588.7 L547.7,1581.3 L553.7,1579.3 L545.9,1574.4 L549.4,1563.3 L552.4,1552.7 L545.9,1549.8 L542.7,1546.4 L531.2,1544.2 L518.2,1547.0 L501.5,1552.7 L486.4,1557.2 L472.8,1560.2 L463.5,1561.7 Z M686.2,1519.3 L692.6,1515.2 L705.5,1514.6 L717.2,1517.5 L729.0,1521.1 L730.1,1525.2 L738.3,1529.3 L732.4,1533.4 L726.6,1532.2 L727.2,1537.5 L721.9,1541.6 L715.5,1539.2 L709.0,1534.5 L702.0,1535.7 L697.9,1534.0 L705.5,1528.7 L697.3,1525.2 L689.1,1524.0 Z M687.9,1505.2 L705.5,1502.9 L729.0,1501.7 L755.9,1501.7 L730.1,1507.6 L717.2,1510.5 L699.6,1511.1 L690.2,1508.8 Z M611.7,1518.7 L621.1,1514.0 L629.3,1514.6 L627.0,1521.7 L617.6,1521.1 Z M624.6,1524.0 L635.2,1518.1 L649.2,1517.0 L658.6,1520.5 L661.0,1525.2 L651.6,1527.5 L637.5,1526.3 Z M663.3,1513.4 L672.7,1512.3 L679.7,1517.0 L672.7,1520.5 L665.7,1518.1 Z M629.3,1509.9 L646.9,1507.6 L660.9,1506.4 L682.0,1507.6 L682.1,1512.3 L665.6,1512.3 L646.9,1512.9 L630.5,1512.3 Z M719.1,1584.3 L733.9,1587.7 L736.6,1582.6 L733.1,1570.8 L720.9,1579.3 Z"/></clipPath>
<clipPath id="eu"><path d="M970.6,1648.3 L975.8,1642.5 L977.7,1634.8 L977.9,1626.1 L977.3,1622.0 L966.3,1624.6 L957.6,1623.5 L952.2,1618.7 L949.1,1612.4 L947.2,1607.7 L940.4,1608.8 L938.8,1612.4 L940.3,1621.6 L936.1,1621.6 L933.8,1612.4 L929.2,1608.8 L928.7,1603.4 L918.7,1598.1 L911.8,1590.5 L908.2,1591.8 L913.5,1601.6 L919.8,1605.6 L926.6,1609.9 L920.2,1617.9 L918.5,1610.3 L909.6,1605.2 L903.8,1599.9 L898.1,1595.3 L891.5,1599.5 L883.8,1599.9 L883.9,1603.8 L875.1,1612.4 L873.7,1616.8 L869.4,1622.8 L859.4,1625.4 L855.3,1620.9 L849.6,1621.6 L848.5,1614.3 L850.9,1603.4 L853.4,1597.4 L864.2,1598.5 L871.0,1598.5 L871.9,1589.4 L868.5,1585.0 L862.7,1581.6 L871.2,1580.3 L879.0,1576.0 L882.8,1572.1 L886.5,1568.0 L887.7,1565.5 L896.4,1563.9 L896.6,1558.7 L895.1,1554.2 L900.8,1552.2 L900.4,1560.2 L902.7,1563.3 L910.2,1563.3 L921.2,1561.7 L927.0,1558.7 L926.3,1554.2 L933.6,1554.2 L933.0,1547.6 L946.1,1545.6 L934.1,1544.8 L926.9,1544.2 L924.5,1537.5 L931.3,1532.4 L924.2,1530.4 L924.0,1534.9 L916.7,1538.8 L916.3,1544.2 L920.2,1546.2 L915.3,1554.2 L910.8,1557.2 L906.7,1558.7 L902.7,1549.8 L900.2,1547.8 L894.4,1551.3 L888.3,1549.0 L886.8,1541.5 L891.2,1537.5 L897.8,1534.9 L902.9,1530.0 L907.6,1524.2 L915.6,1520.9 L925.7,1518.8 L934.2,1518.8 L941.2,1520.9 L946.0,1522.4 L964.9,1526.4 L959.7,1530.0 L952.3,1531.2 L964.6,1531.2 L972.5,1528.8 L970.4,1524.2 L989.9,1524.2 L1000.1,1523.0 L1003.7,1522.0 L1022.5,1524.2 L1019.8,1514.9 L1026.3,1515.3 L1031.1,1524.2 L1031.7,1516.8 L1039.6,1514.0 L1052.2,1512.2 L1067.8,1509.7 L1080.6,1507.2 L1098.8,1508.9 L1107.5,1514.0 L1123.1,1514.9 L1141.0,1515.9 L1151.6,1518.8 L1166.0,1515.9 L1190.0,1517.8 L1217.4,1521.5 L1237.7,1520.9 L1252.4,1522.0 L1263.9,1523.5 L1277.8,1531.2 L1283.7,1538.8 L1277.6,1545.6 L1261.8,1546.2 L1277.4,1557.2 L1279.6,1571.2 L1255.3,1554.2 L1238.9,1541.5 L1232.0,1547.0 L1216.0,1547.6 L1218.4,1563.3 L1233.0,1568.0 L1242.4,1581.0 L1242.6,1598.1 L1234.1,1601.6 L1234.7,1608.8 L1234.9,1616.1 L1244.1,1625.4 L1238.8,1631.0 L1231.4,1619.8 L1224.4,1612.4 L1213.8,1608.8 L1216.0,1615.0 L1205.8,1614.3 L1212.6,1621.6 L1222.5,1621.6 L1220.1,1631.0 L1232.9,1646.3 L1233.2,1658.1 L1228.1,1674.0 L1217.8,1680.0 L1209.8,1684.1 L1203.2,1682.0 L1198.1,1686.1 L1198.4,1694.2 L1212.4,1710.6 L1214.4,1723.1 L1203.2,1734.3 L1199.3,1727.2 L1188.7,1717.7 L1185.5,1729.3 L1189.8,1741.8 L1200.2,1758.6 L1201.9,1765.7 L1192.4,1760.7 L1183.2,1737.7 L1181.3,1733.5 L1175.5,1702.4 L1166.6,1704.5 L1162.8,1692.2 L1155.6,1684.1 L1148.1,1680.0 L1142.2,1681.2 L1139.1,1688.1 L1134.1,1694.2 L1127.7,1702.4 L1124.1,1716.9 L1124.6,1728.1 L1117.5,1737.7 L1112.2,1729.3 L1105.7,1710.6 L1097.9,1692.2 L1095.3,1682.0 L1087.0,1678.0 L1081.8,1674.0 L1074.4,1666.4 L1061.0,1667.2 L1047.1,1664.8 L1044.8,1660.0 L1037.7,1662.0 L1027.9,1656.9 L1022.1,1648.3 L1016.2,1648.3 L1018.9,1656.1 L1026.2,1664.8 L1029.9,1670.0 L1037.6,1671.2 L1042.5,1664.0 L1045.0,1670.0 L1056.2,1678.0 L1051.1,1692.2 L1044.3,1700.4 L1035.7,1706.5 L1014.8,1717.7 L1010.2,1717.7 L1007.4,1708.6 L1004.2,1698.3 L997.2,1688.1 L991.3,1674.0 L984.2,1664.0 L978.9,1656.1 L977.6,1650.2 L974.4,1656.1 L970.6,1648.3 Z"/></clipPath>
</defs>
<g fill="#2b2b2c" stroke="#3a3a3b" stroke-width="1.2">
<path d="M463.5,1561.7 L485.9,1549.8 L487.6,1544.2 L493.1,1538.8 L511.1,1533.7 L499.7,1530.9 L516.2,1527.6 L516.5,1523.5 L530.3,1520.5 L545.9,1518.2 L553.7,1519.2 L570.4,1520.7 L579.8,1523.0 L597.9,1520.9 L609.2,1522.0 L625.9,1524.2 L639.8,1525.3 L663.3,1525.7 L677.8,1517.8 L683.3,1523.0 L693.4,1521.3 L695.5,1526.4 L689.1,1528.7 L682.0,1533.4 L665.6,1536.9 L655.1,1541.6 L649.2,1548.6 L650.4,1554.5 L658.6,1558.0 L669.1,1561.5 L668.0,1569.7 L670.3,1573.2 L675.0,1567.4 L676.2,1562.7 L687.9,1555.7 L689.1,1548.6 L692.6,1541.6 L699.6,1538.1 L705.5,1536.9 L714.9,1540.4 L711.3,1546.3 L713.7,1551.0 L721.9,1547.4 L723.1,1546.3 L724.3,1555.7 L732.5,1565.0 L719.8,1575.4 L704.0,1576.0 L690.0,1584.3 L704.6,1581.0 L703.1,1586.0 L711.8,1590.1 L695.8,1597.1 L684.6,1598.1 L682.2,1604.5 L669.6,1608.8 L662.9,1616.1 L657.8,1627.2 L638.7,1642.5 L636.9,1660.0 L633.7,1667.2 L629.9,1658.1 L628.2,1648.3 L613.7,1647.5 L598.2,1650.2 L586.0,1658.1 L578.5,1680.0 L581.3,1692.2 L596.2,1694.2 L600.4,1684.1 L610.8,1682.0 L604.7,1698.3 L602.6,1705.3 L615.9,1705.3 L615.7,1721.0 L619.0,1732.7 L626.9,1731.4 L632.8,1735.6 L633.2,1739.8 L630.9,1741.0 L624.7,1740.6 L615.6,1736.4 L607.7,1729.3 L603.5,1716.9 L591.6,1712.7 L583.6,1704.5 L574.4,1704.5 L562.1,1696.3 L553.6,1686.1 L556.8,1676.0 L549.9,1662.0 L543.7,1650.2 L540.6,1641.7 L541.4,1652.2 L544.1,1676.0 L538.7,1668.8 L535.3,1656.9 L535.0,1642.5 L535.0,1637.9 L528.6,1631.0 L528.7,1619.8 L530.4,1609.5 L535.0,1599.9 L544.0,1588.7 L547.7,1581.3 L553.7,1579.3 L545.9,1574.4 L549.4,1563.3 L552.4,1552.7 L545.9,1549.8 L542.7,1546.4 L531.2,1544.2 L518.2,1547.0 L501.5,1552.7 L486.4,1557.2 L472.8,1560.2 L463.5,1561.7 Z"/>
<path d="M730.1,1507.6 L757.1,1502.3 L787.5,1501.7 L834.4,1502.3 L850.8,1503.5 L834.4,1506.4 L833.3,1513.4 L822.7,1520.5 L801.6,1527.5 L787.6,1532.2 L775.8,1539.2 L770.0,1546.3 L761.8,1542.8 L755.9,1531.0 L759.4,1520.5 L755.9,1513.4 L740.7,1509.9 Z"/>
<path d="M719.1,1584.3 L733.9,1587.7 L736.6,1582.6 L733.1,1570.8 L720.9,1579.3 Z"/>
<path d="M632.8,1735.6 L637.8,1731.4 L641.5,1725.2 L651.4,1719.3 L652.2,1727.2 L663.1,1727.2 L681.9,1726.4 L687.5,1735.6 L696.4,1746.0 L712.0,1750.2 L718.0,1763.6 L722.7,1775.4 L736.9,1781.7 L752.6,1785.9 L765.3,1794.3 L765.8,1808.9 L754.7,1825.5 L755.3,1844.1 L752.1,1860.4 L742.1,1866.4 L730.1,1878.4 L731.0,1888.3 L723.7,1901.8 L719.8,1911.4 L708.3,1911.4 L713.0,1924.5 L701.3,1928.1 L695.2,1935.4 L699.7,1940.8 L698.7,1949.5 L695.3,1954.7 L701.3,1959.8 L698.2,1968.0 L701.2,1974.4 L710.0,1982.2 L704.5,1983.7 L695.5,1980.7 L685.2,1972.8 L676.2,1959.8 L674.4,1946.0 L670.4,1931.8 L666.7,1920.8 L666.9,1901.8 L663.1,1886.3 L662.6,1866.4 L659.9,1848.2 L643.5,1835.9 L632.1,1817.2 L622.9,1798.5 L620.3,1790.1 L623.8,1781.7 L622.1,1771.2 L626.9,1764.9 L631.8,1754.4 L632.3,1743.9 L630.9,1741.0 L633.2,1739.8 Z"/>
<path d="M717.9,1970.6 L726.2,1970.3 L726.2,1973.5 L721.1,1973.5 Z"/>
<path d="M858.5,1626.1 L872.2,1628.4 L883.6,1622.4 L903.4,1620.9 L906.6,1629.1 L904.6,1634.8 L918.7,1639.4 L932.3,1646.3 L934.7,1638.6 L945.0,1640.6 L960.0,1645.2 L969.5,1643.2 L971.0,1648.7 L980.5,1672.0 L988.3,1684.1 L993.3,1696.3 L998.6,1706.5 L1009.5,1722.7 L1013.9,1727.7 L1034.4,1721.4 L1031.5,1737.7 L1019.6,1762.8 L1007.1,1775.4 L999.0,1792.2 L997.7,1804.7 L1001.3,1817.2 L1000.3,1833.8 L988.7,1846.1 L981.2,1862.4 L973.5,1878.4 L971.3,1888.3 L962.8,1899.2 L953.1,1907.6 L940.0,1909.5 L932.5,1912.5 L928.1,1910.2 L926.9,1901.8 L919.8,1882.4 L918.9,1866.4 L914.9,1850.2 L911.5,1840.0 L917.1,1821.4 L913.3,1796.4 L903.4,1775.4 L904.9,1756.5 L901.8,1752.3 L890.8,1746.0 L878.2,1746.0 L865.7,1750.2 L851.6,1752.3 L839.1,1742.7 L832.9,1733.5 L826.9,1723.1 L821.9,1709.8 L824.7,1690.1 L823.4,1684.1 L830.0,1670.0 L836.5,1658.1 L846.2,1650.2 L847.5,1638.6 L855.5,1632.9 L858.5,1626.1 Z"/>
<path d="M1028.4,1821.4 L1031.0,1835.9 L1027.4,1842.0 L1016.4,1872.4 L1010.5,1876.4 L1007.6,1862.4 L1012.0,1837.9 L1022.4,1827.6 L1028.4,1821.4 Z"/>
<path d="M970.6,1648.3 L975.8,1642.5 L977.7,1634.8 L977.9,1626.1 L977.3,1622.0 L966.3,1624.6 L957.6,1623.5 L952.2,1618.7 L949.1,1612.4 L947.2,1607.7 L940.4,1608.8 L938.8,1612.4 L940.3,1621.6 L936.1,1621.6 L933.8,1612.4 L929.2,1608.8 L928.7,1603.4 L918.7,1598.1 L911.8,1590.5 L908.2,1591.8 L913.5,1601.6 L919.8,1605.6 L926.6,1609.9 L920.2,1617.9 L918.5,1610.3 L909.6,1605.2 L903.8,1599.9 L898.1,1595.3 L891.5,1599.5 L883.8,1599.9 L883.9,1603.8 L875.1,1612.4 L873.7,1616.8 L869.4,1622.8 L859.4,1625.4 L855.3,1620.9 L849.6,1621.6 L848.5,1614.3 L850.9,1603.4 L853.4,1597.4 L864.2,1598.5 L871.0,1598.5 L871.9,1589.4 L868.5,1585.0 L862.7,1581.6 L871.2,1580.3 L879.0,1576.0 L882.8,1572.1 L886.5,1568.0 L887.7,1565.5 L896.4,1563.9 L896.6,1558.7 L895.1,1554.2 L900.8,1552.2 L900.4,1560.2 L902.7,1563.3 L910.2,1563.3 L921.2,1561.7 L927.0,1558.7 L926.3,1554.2 L933.6,1554.2 L933.0,1547.6 L946.1,1545.6 L934.1,1544.8 L926.9,1544.2 L924.5,1537.5 L931.3,1532.4 L924.2,1530.4 L924.0,1534.9 L916.7,1538.8 L916.3,1544.2 L920.2,1546.2 L915.3,1554.2 L910.8,1557.2 L906.7,1558.7 L902.7,1549.8 L900.2,1547.8 L894.4,1551.3 L888.3,1549.0 L886.8,1541.5 L891.2,1537.5 L897.8,1534.9 L902.9,1530.0 L907.6,1524.2 L915.6,1520.9 L925.7,1518.8 L934.2,1518.8 L941.2,1520.9 L946.0,1522.4 L964.9,1526.4 L959.7,1530.0 L952.3,1531.2 L964.6,1531.2 L972.5,1528.8 L970.4,1524.2 L989.9,1524.2 L1000.1,1523.0 L1003.7,1522.0 L1022.5,1524.2 L1019.8,1514.9 L1026.3,1515.3 L1031.1,1524.2 L1031.7,1516.8 L1039.6,1514.0 L1052.2,1512.2 L1067.8,1509.7 L1080.6,1507.2 L1098.8,1508.9 L1107.5,1514.0 L1123.1,1514.9 L1141.0,1515.9 L1151.6,1518.8 L1166.0,1515.9 L1190.0,1517.8 L1217.4,1521.5 L1237.7,1520.9 L1252.4,1522.0 L1263.9,1523.5 L1277.8,1531.2 L1283.7,1538.8 L1277.6,1545.6 L1261.8,1546.2 L1277.4,1557.2 L1279.6,1571.2 L1255.3,1554.2 L1238.9,1541.5 L1232.0,1547.0 L1216.0,1547.6 L1218.4,1563.3 L1233.0,1568.0 L1242.4,1581.0 L1242.6,1598.1 L1234.1,1601.6 L1234.7,1608.8 L1234.9,1616.1 L1244.1,1625.4 L1238.8,1631.0 L1231.4,1619.8 L1224.4,1612.4 L1213.8,1608.8 L1216.0,1615.0 L1205.8,1614.3 L1212.6,1621.6 L1222.5,1621.6 L1220.1,1631.0 L1232.9,1646.3 L1233.2,1658.1 L1228.1,1674.0 L1217.8,1680.0 L1209.8,1684.1 L1203.2,1682.0 L1198.1,1686.1 L1198.4,1694.2 L1212.4,1710.6 L1214.4,1723.1 L1203.2,1734.3 L1199.3,1727.2 L1188.7,1717.7 L1185.5,1729.3 L1189.8,1741.8 L1200.2,1758.6 L1201.9,1765.7 L1192.4,1760.7 L1183.2,1737.7 L1181.3,1733.5 L1175.5,1702.4 L1166.6,1704.5 L1162.8,1692.2 L1155.6,1684.1 L1148.1,1680.0 L1142.2,1681.2 L1139.1,1688.1 L1134.1,1694.2 L1127.7,1702.4 L1124.1,1716.9 L1124.6,1728.1 L1117.5,1737.7 L1112.2,1729.3 L1105.7,1710.6 L1097.9,1692.2 L1095.3,1682.0 L1087.0,1678.0 L1081.8,1674.0 L1074.4,1666.4 L1061.0,1667.2 L1047.1,1664.8 L1044.8,1660.0 L1037.7,1662.0 L1027.9,1656.9 L1022.1,1648.3 L1016.2,1648.3 L1018.9,1656.1 L1026.2,1664.8 L1029.9,1670.0 L1037.6,1671.2 L1042.5,1664.0 L1045.0,1670.0 L1056.2,1678.0 L1051.1,1692.2 L1044.3,1700.4 L1035.7,1706.5 L1014.8,1717.7 L1010.2,1717.7 L1007.4,1708.6 L1004.2,1698.3 L997.2,1688.1 L991.3,1674.0 L984.2,1664.0 L978.9,1656.1 L977.6,1650.2 L974.4,1656.1 L970.6,1648.3 Z"/>
<path d="M486.3,1523.5 L491.8,1526.4 L497.6,1529.5 L486.2,1533.7 L479.3,1532.4 L472.4,1531.2 Z"/>
<path d="M860.3,1576.0 L878.9,1571.8 L879.4,1567.3 L875.1,1564.8 L871.4,1559.3 L870.2,1555.7 L870.7,1552.4 L866.7,1549.6 L863.1,1549.6 L860.0,1554.2 L861.5,1558.7 L867.6,1560.8 L867.0,1565.1 L863.5,1567.0 L864.9,1570.8 L860.3,1576.0 Z"/>
<path d="M859.8,1569.6 L859.6,1561.7 L854.0,1559.6 L849.9,1564.8 L849.5,1570.8 L854.6,1570.8 L859.8,1569.6 Z"/>
<path d="M819.2,1531.0 L828.6,1529.9 L841.5,1530.4 L843.8,1533.4 L832.1,1537.5 L821.6,1535.1 Z"/>
<path d="M1124.8,1730.1 L1131.1,1739.8 L1130.5,1745.2 L1126.5,1746.0 L1124.7,1737.7 L1124.8,1730.1 Z"/>
<path d="M1254.8,1589.4 L1248.6,1577.7 L1231.2,1562.3 L1240.2,1572.8 Z"/>
<path d="M1238.7,1676.8 L1242.1,1680.0 L1241.2,1668.0 L1238.0,1667.2 Z"/>
<path d="M1207.3,1691.4 L1212.2,1687.7 L1214.2,1689.7 L1211.0,1695.4 Z"/>
<path d="M1217.6,1764.1 L1219.5,1776.2 L1222.1,1783.8 L1234.5,1788.0 L1240.9,1785.9 L1239.6,1775.4 L1244.3,1767.8 L1249.1,1767.0 L1244.5,1753.2 L1248.3,1749.4 L1241.5,1741.8 L1237.1,1749.4 L1230.0,1757.8 L1222.3,1763.6 L1217.6,1764.1 Z"/>
<path d="M1173.9,1747.7 L1180.9,1749.4 L1190.5,1762.0 L1201.3,1775.4 L1208.0,1783.8 L1206.8,1795.5 L1202.7,1795.5 L1195.3,1788.0 L1190.9,1777.5 L1184.9,1763.6 L1173.9,1747.7 Z"/>
<path d="M1204.6,1799.7 L1215.0,1798.5 L1227.7,1800.1 L1233.3,1803.9 L1225.3,1806.0 L1208.5,1802.2 Z"/>
<path d="M1248.2,1783.8 L1250.3,1771.2 L1252.8,1767.0 L1267.2,1764.9 L1255.4,1769.9 L1262.9,1775.0 L1255.9,1778.8 L1259.4,1791.3 L1256.4,1790.1 L1253.6,1783.0 L1252.6,1794.7 L1249.8,1794.3 Z"/>
<path d="M1286.7,1776.7 L1296.2,1775.0 L1302.4,1780.4 L1308.7,1777.9 L1318.0,1782.1 L1330.2,1788.8 L1337.4,1796.4 L1337.4,1804.7 L1342.7,1815.2 L1333.7,1813.1 L1328.8,1803.9 L1323.4,1808.9 L1315.6,1809.3 L1309.9,1805.2 L1307.3,1793.0 L1298.8,1789.7 L1292.0,1788.0 L1289.1,1783.0 L1286.7,1776.7 Z"/>
<path d="M1219.3,1862.4 L1215.9,1878.4 L1213.2,1894.1 L1206.6,1909.5 L1213.5,1913.3 L1227.2,1908.7 L1234.6,1905.3 L1251.3,1900.7 L1258.1,1899.9 L1264.4,1904.9 L1264.1,1912.5 L1273.5,1905.7 L1272.7,1912.5 L1270.3,1923.7 L1277.8,1927.4 L1285.1,1928.1 L1299.3,1922.6 L1311.7,1908.7 L1322.8,1898.0 L1330.6,1886.3 L1334.3,1874.4 L1331.7,1864.4 L1328.7,1857.5 L1322.9,1850.2 L1324.3,1833.8 L1319.7,1829.7 L1319.2,1816.0 L1314.3,1825.5 L1311.3,1840.0 L1307.9,1843.7 L1303.1,1843.3 L1297.9,1837.1 L1294.2,1833.0 L1300.4,1822.2 L1289.1,1819.3 L1282.3,1822.2 L1278.9,1825.5 L1275.4,1833.8 L1270.1,1829.7 L1263.5,1831.8 L1255.1,1842.0 L1250.1,1846.1 L1244.8,1852.7 L1236.4,1855.5 L1230.6,1856.7 L1222.9,1861.6 L1219.3,1862.4 Z"/>
<path d="M1276.1,1934.3 L1285.8,1935.0 L1278.8,1943.2 L1274.4,1944.6 L1273.6,1940.0 L1276.1,1934.3 Z"/>
<path d="M984.3,1517.8 L991.5,1519.4 L996.8,1519.4 L988.4,1514.4 L995.7,1510.0 L1011.4,1508.3 L992.1,1510.5 L986.2,1514.0 Z"/>
<path d="M896.7,1506.0 L907.1,1508.9 L924.6,1507.4 L927.3,1503.8 L910.0,1504.2 L896.5,1504.5 Z"/>
<path d="M1060.8,1505.4 L1071.4,1506.0 L1079.5,1504.8 L1067.6,1503.0 Z"/>
<path d="M1152.7,1511.4 L1165.7,1513.1 L1174.1,1510.9 L1155.6,1509.4 Z"/>
<path d="M497.2,1517.8 L501.3,1518.4 L495.9,1519.0 Z"/>
<path d="M686.2,1519.3 L692.6,1515.2 L705.5,1514.6 L717.2,1517.5 L729.0,1521.1 L730.1,1525.2 L738.3,1529.3 L732.4,1533.4 L726.6,1532.2 L727.2,1537.5 L721.9,1541.6 L715.5,1539.2 L709.0,1534.5 L702.0,1535.7 L697.9,1534.0 L705.5,1528.7 L697.3,1525.2 L689.1,1524.0 Z"/>
<path d="M687.9,1505.2 L705.5,1502.9 L729.0,1501.7 L755.9,1501.7 L730.1,1507.6 L717.2,1510.5 L699.6,1511.1 L690.2,1508.8 Z"/>
<path d="M611.7,1518.7 L621.1,1514.0 L629.3,1514.6 L627.0,1521.7 L617.6,1521.1 Z"/>
<path d="M624.6,1524.0 L635.2,1518.1 L649.2,1517.0 L658.6,1520.5 L661.0,1525.2 L651.6,1527.5 L637.5,1526.3 Z"/>
<path d="M663.3,1513.4 L672.7,1512.3 L679.7,1517.0 L672.7,1520.5 L665.7,1518.1 Z"/>
<path d="M629.3,1509.9 L646.9,1507.6 L660.9,1506.4 L682.0,1507.6 L682.1,1512.3 L665.6,1512.3 L646.9,1512.9 L630.5,1512.3 Z"/>
<path d="M617.1,1680.8 L633.5,1675.2 L648.8,1687.3 L638.4,1688.9 L626.9,1677.6 L617.1,1680.8 Z"/>
<path d="M646.8,1694.2 L665.8,1693.8 L661.4,1688.5 L652.3,1688.5 Z"/>
<path d="M635.1,1694.6 L641.2,1696.3 L638.7,1697.1 Z"/>
<path d="M669.1,1694.2 L673.9,1695.0 L669.5,1696.3 Z"/>
<path d="M1251.4,1634.8 L1256.4,1635.6 L1257.9,1643.2 L1255.5,1643.2 Z"/>
<path d="M1251.8,1631.0 L1264.7,1633.7 L1268.8,1630.6 L1276.6,1629.1 L1274.7,1621.6 L1269.2,1610.6 L1265.2,1605.9 L1263.8,1608.8 L1268.1,1616.1 L1264.6,1622.4 L1263.8,1626.9 L1255.5,1627.2 Z"/>
<path d="M1261.3,1605.2 L1262.9,1601.6 L1269.7,1603.4 L1271.7,1598.8 L1256.2,1591.1 L1259.5,1597.1 L1258.8,1601.6 Z"/>
<path d="M1257.1,1632.9 L1262.4,1632.2 L1263.0,1636.0 L1259.0,1636.7 Z"/>
<path d="M1242.9,1694.2 L1250.6,1694.6 L1251.4,1704.5 L1260.0,1716.9 L1251.7,1713.5 L1248.0,1710.6 L1244.3,1703.2 Z"/>
<path d="M1257.1,1741.8 L1262.7,1735.6 L1271.0,1739.8 L1270.0,1746.0 L1263.8,1746.0 Z"/>
<path d="M1258.8,1729.3 L1266.0,1725.2 L1265.2,1730.1 L1260.8,1732.2 Z"/>
<path d="M1241.6,1736.4 L1247.2,1724.3 L1248.6,1727.2 L1242.6,1737.7 Z"/>
<path d="M1234.7,1805.6 L1247.3,1805.6 L1246.9,1808.9 L1236.0,1808.5 Z"/>
<path d="M1248.4,1808.9 L1266.1,1804.7 L1272.2,1806.4 L1261.8,1813.9 L1249.5,1813.1 Z"/>
<path d="M1275.7,1764.9 L1278.9,1767.0 L1277.3,1774.6 L1275.8,1771.2 Z"/>
<path d="M1270.8,1783.8 L1277.7,1784.6 L1276.3,1787.2 Z"/>
<path d="M1277.7,1785.5 L1285.8,1785.9 L1283.2,1787.6 Z"/>
<path d="M1345.5,1794.3 L1352.2,1788.8 L1350.1,1795.5 Z"/>
<path d="M1360.9,1796.4 L1363.6,1800.6 L1362.3,1798.5 Z"/>
<path d="M1371.8,1808.9 L1379.0,1813.1 L1374.6,1811.0 Z"/>
<path d="M1389.8,1833.8 L1391.1,1840.0 L1390.8,1835.9 Z"/>
<path d="M1375.3,1855.1 L1381.1,1863.6 L1377.1,1858.3 Z"/>
<path d="M1419.8,1843.7 L1424.2,1843.3 L1421.1,1847.0 Z"/>
<path d="M1426.5,1840.0 L1430.0,1838.8 L1427.4,1842.0 Z"/>
<path d="M1372.8,1911.0 L1371.4,1920.0 L1379.3,1923.4 L1373.1,1928.9 L1358.4,1937.5 L1357.7,1936.1 L1361.6,1928.9 L1367.4,1924.5 Z"/>
<path d="M1354.3,1933.6 L1355.3,1937.9 L1344.9,1944.6 L1337.9,1947.8 L1325.0,1955.0 L1320.3,1953.0 L1323.7,1950.2 L1331.6,1946.0 L1345.3,1939.0 Z"/>
<path d="M967.9,1630.3 L973.7,1626.9 L971.1,1628.8 Z"/>
<path d="M942.4,1628.0 L950.4,1628.4 L944.0,1629.5 Z"/>
<path d="M898.1,1614.3 L902.6,1614.3 L901.6,1606.3 L897.8,1607.0 Z"/>
<path d="M910.1,1617.9 L919.0,1616.8 L918.0,1622.8 Z"/>
<path d="M898.8,1605.2 L901.6,1605.2 L900.8,1599.9 Z"/>
<path d="M397.6,1692.2 L401.0,1691.4 L399.9,1687.3 Z"/>
<path d="M394.2,1682.8 L396.4,1682.0 L395.5,1681.2 Z"/>
<path d="M397.4,1685.7 L400.2,1684.9 L398.9,1684.1 Z"/>
</g>
<g clip-path="url(#na)" stroke="none">
<path d="M611.5,1498.7 L542.3,1544.8 L546.3,1548.4 L553.9,1547.0 L554.3,1549.8 L552.8,1557.2 L552.3,1560.2 L549.4,1563.3 L509.2,1579.3 L553.7,1579.3 L626.8,1579.3 L639.4,1582.6 L649.7,1587.7 L653.4,1591.8 L649.0,1601.6 L646.9,1603.4 L659.8,1598.8 L668.0,1595.3 L673.9,1592.9 L682.5,1592.9 L688.9,1587.0 L692.0,1584.7 L695.0,1585.0 L693.4,1590.5 L694.4,1593.6 L735.8,1610.6 L781.6,1498.7 Z" fill="#5c2f25"/>
<path d="M522.3,1579.3 L626.8,1579.3 L639.4,1582.6 L649.7,1587.7 L653.4,1591.8 L649.0,1601.6 L646.9,1603.4 L659.8,1598.8 L668.0,1595.3 L673.9,1592.9 L682.5,1592.9 L688.9,1587.0 L692.0,1584.7 L695.0,1585.0 L693.4,1590.5 L694.4,1593.6 L708.0,1610.6 L646.2,1688.1 L584.4,1664.4 L579.4,1658.1 L576.5,1649.1 L571.0,1652.2 L567.4,1649.8 L564.7,1641.3 L559.0,1643.2 L550.8,1643.2 L542.2,1637.9 L534.9,1638.6 L478.3,1648.3 Z" fill="#a54e2d"/>
<path d="M601.6,1504.2 L542.3,1544.8 L546.3,1548.4 L553.9,1547.0 L554.3,1549.8 L552.8,1557.2 L552.3,1560.2 L549.4,1563.3 L512.2,1576.0 L408.5,1576.0 L526.0,1504.2 Z" fill="#a54e2d"/>
</g>
<g fill="#a54e2d"><path d="M397.6,1692.2 L401.0,1691.4 L399.9,1687.3 Z"/><path d="M394.2,1682.8 L396.4,1682.0 L395.5,1681.2 Z"/><path d="M397.4,1685.7 L400.2,1684.9 L398.9,1684.1 Z"/></g>
<g clip-path="url(#eu)"><path d="M1080.2,1673.6 L1088.6,1670.4 L1086.3,1666.0 L1082.5,1662.0 L1084.2,1656.1 L1088.6,1649.8 L1092.1,1646.3 L1091.8,1638.6 L1087.9,1631.0 L1092.4,1627.2 L1098.4,1628.0 L1105.5,1638.6 L1104.8,1642.5 L1110.8,1647.1 L1111.8,1653.0 L1122.7,1658.5 L1128.6,1661.6 L1138.0,1662.0 L1136.8,1656.5 L1139.3,1659.3 L1142.8,1661.2 L1149.5,1660.4 L1154.3,1657.7 L1157.9,1654.9 L1163.1,1655.3 L1163.7,1659.3 L1159.1,1664.0 L1159.5,1670.0 L1156.9,1674.0 L1157.6,1679.2 L1156.0,1680.4 L1153.1,1673.2 L1150.6,1671.6 L1152.1,1668.0 L1144.8,1666.4 L1141.3,1664.4 L1140.6,1668.8 L1143.2,1674.8 L1145.5,1682.0 L1147.1,1708.6 L1110.6,1758.6 L1076.0,1708.6 L1075.3,1680.0 Z" fill="#733a26"/></g>
<g fill="#552e24"><path d="M1219.3,1862.4 L1215.9,1878.4 L1213.2,1894.1 L1206.6,1909.5 L1213.5,1913.3 L1227.2,1908.7 L1234.6,1905.3 L1251.3,1900.7 L1258.1,1899.9 L1264.4,1904.9 L1264.1,1912.5 L1273.5,1905.7 L1272.7,1912.5 L1270.3,1923.7 L1277.8,1927.4 L1285.1,1928.1 L1299.3,1922.6 L1311.7,1908.7 L1322.8,1898.0 L1330.6,1886.3 L1334.3,1874.4 L1331.7,1864.4 L1328.7,1857.5 L1322.9,1850.2 L1324.3,1833.8 L1319.7,1829.7 L1319.2,1816.0 L1314.3,1825.5 L1311.3,1840.0 L1307.9,1843.7 L1303.1,1843.3 L1297.9,1837.1 L1294.2,1833.0 L1300.4,1822.2 L1289.1,1819.3 L1282.3,1822.2 L1278.9,1825.5 L1275.4,1833.8 L1270.1,1829.7 L1263.5,1831.8 L1255.1,1842.0 L1250.1,1846.1 L1244.8,1852.7 L1236.4,1855.5 L1230.6,1856.7 L1222.9,1861.6 L1219.3,1862.4 Z"/><path d="M1276.1,1934.3 L1285.8,1935.0 L1278.8,1943.2 L1274.4,1944.6 L1273.6,1940.0 L1276.1,1934.3 Z"/></g>
<g fill="#19191c"><path d="M952.4,1605.9 L955.8,1606.3 L962.2,1606.3 L971.3,1603.4 L980.3,1607.0 L989.6,1605.2 L988.5,1599.9 L977.8,1594.6 L973.3,1592.2 L969.4,1592.9 L965.7,1594.6 L962.3,1591.1 L957.6,1587.4 L954.8,1592.9 L952.7,1596.7 L951.8,1601.6 Z"/><path d="M1004.8,1599.9 L1012.7,1609.5 L1013.3,1617.9 L1018.3,1621.6 L1028.4,1622.4 L1026.4,1614.3 L1022.7,1610.6 L1026.5,1607.0 L1020.6,1602.7 L1015.0,1599.2 L1011.0,1594.3 L1017.5,1591.8 L1016.0,1586.7 L1007.0,1587.7 L1002.6,1591.1 Z"/></g>
<path d="M869.9,1628.8 L871.6,1640.2 L864.6,1642.1 L849.4,1653.4 L849.2,1658.9 M849.2,1658.9 L849.1,1664.4 L839.2,1664.4 L838.9,1674.0 L835.6,1682.8 L823.4,1682.8 M835.9,1657.3 L849.3,1657.3 M849.2,1658.9 L860.7,1668.0 L878.8,1684.1 L888.3,1691.4 M899.5,1622.0 L899.0,1630.6 L903.0,1647.5 M903.0,1647.5 L905.1,1666.8 L911.0,1674.0 M911.0,1674.0 L897.9,1684.5 L892.8,1690.5 L888.3,1691.4 M948.0,1642.1 L950.9,1680.0 L987.0,1680.0 M950.9,1680.0 L951.4,1688.1 L948.4,1690.1 L949.2,1705.7 M911.0,1674.0 L920.4,1676.0 L948.4,1690.1 M839.6,1706.5 L858.1,1706.5 L858.2,1702.4 L857.1,1668.4 M888.3,1691.4 L887.4,1702.4 L878.2,1708.6 L876.6,1712.7 L878.2,1716.9 L886.3,1722.2 M920.4,1676.0 L921.4,1684.9 L917.2,1712.7 L920.2,1721.0 L923.5,1729.3 M949.2,1705.7 L944.8,1712.7 L943.5,1718.9 L948.5,1733.5 L959.4,1731.4 L978.1,1729.3 L981.3,1731.4 M988.1,1711.5 L1008.7,1718.9 M988.1,1711.5 L981.3,1731.4 L984.9,1750.2 L1006.6,1754.4 L1013.1,1750.6 L1025.2,1737.7 L1012.6,1733.5 L1008.4,1725.2 M1003.9,1778.3 L1003.8,1754.8 M981.9,1775.4 L992.9,1783.8 L998.1,1790.9 M981.9,1775.4 L981.8,1754.4 L984.9,1750.2 M883.6,1744.4 L886.3,1722.2 L887.5,1714.8 L896.8,1716.9 L906.1,1715.6 L917.3,1714.8 L920.2,1721.0 L913.3,1740.2 L901.8,1751.9 M913.3,1796.4 L926.8,1796.0 L928.3,1804.7 L940.9,1800.6 L943.6,1817.2 L949.9,1817.2 L960.6,1821.4 L968.9,1806.0 L967.7,1790.1 L969.4,1775.4 L968.0,1752.3 L950.4,1750.2 L934.7,1752.3 L933.2,1756.5 L930.1,1775.4 L925.4,1779.6 L914.3,1792.2 M920.5,1737.7 L925.2,1739.8 L934.5,1733.5 L942.1,1725.2 L948.5,1733.5 M920.5,1737.7 L923.5,1729.3 M920.5,1737.7 L925.4,1762.8 L933.2,1756.5 M904.9,1762.0 L910.6,1762.0 L925.4,1762.8 M911.4,1843.3 L936.5,1845.3 L947.2,1846.1 M936.5,1846.1 L935.1,1874.4 L934.3,1888.3 L923.9,1888.7 M935.2,1873.6 L951.5,1876.4 L963.0,1863.2 L969.9,1864.0 M969.9,1864.0 L976.2,1848.2 L969.0,1836.3 M949.9,1817.2 L948.8,1846.1 L954.9,1846.1 L969.0,1836.3 L977.3,1829.7 L984.0,1819.3 L1001.1,1814.7 M858.0,1727.7 L866.7,1726.0 L875.1,1725.2 L878.2,1723.9 L886.3,1722.2 M839.4,1719.3 L850.2,1721.0 L858.0,1727.7 M848.5,1739.8 L850.2,1727.2 M865.7,1749.8 L866.7,1726.0 M878.2,1745.6 L876.7,1725.2 M823.2,1719.3 L839.4,1719.3 L839.6,1706.5 M966.2,1783.0 L970.9,1775.4 L968.0,1752.3 M960.7,1749.8 L968.0,1752.3 L981.8,1754.4 M870.2,1598.5 L877.0,1600.6 L883.9,1602.0 M850.6,1603.8 L857.2,1603.8 L854.2,1612.1 L855.3,1620.9 M881.5,1572.4 L886.3,1576.3 L891.8,1577.7 L896.5,1579.3 L895.2,1584.0 L891.1,1588.7 L893.8,1589.8 L892.9,1592.9 L895.5,1597.1 M910.7,1563.6 L912.6,1569.6 L913.7,1572.8 L919.1,1575.0 L924.0,1577.7 M906.1,1575.0 L913.7,1572.8 M906.1,1575.0 L911.2,1580.0 L909.5,1584.3 L900.5,1584.3 L895.2,1584.0 M890.2,1564.8 L890.7,1569.9 L890.6,1573.4 L891.8,1577.7 M896.5,1560.5 L899.7,1560.8 M893.8,1589.8 L903.0,1586.7 L908.3,1586.0 L911.6,1587.7 L911.8,1590.8 M919.4,1580.6 L918.7,1584.3 L917.9,1586.7 M919.6,1580.0 L924.0,1577.7 M924.0,1577.7 L934.1,1579.0 L937.2,1573.4 L935.0,1569.6 L935.0,1563.6 M922.5,1562.0 L932.0,1562.0 L934.0,1563.6 M911.8,1590.8 L916.5,1588.4 L920.2,1588.1 L925.4,1589.8 L929.3,1589.1 L934.9,1583.0 M929.3,1589.1 L936.0,1595.0 L937.6,1599.2 L936.6,1602.4 L931.8,1606.6 M928.4,1603.4 L932.1,1601.6 L934.1,1602.4 M936.0,1595.0 L952.8,1597.4 M936.6,1602.4 L946.6,1603.8 L952.1,1603.4 M932.1,1606.6 L933.6,1610.6 L938.1,1605.9 L948.2,1605.2 M934.9,1583.0 L945.1,1582.0 L950.8,1591.1 L954.7,1591.8 M935.0,1569.6 L935.0,1563.6 L938.8,1562.3 L941.0,1558.1 L944.4,1556.6 L954.7,1566.4 L958.3,1568.9 L953.3,1571.8 L935.5,1571.2 M926.7,1556.9 L940.7,1558.1 M927.3,1552.7 L933.8,1551.6 L941.6,1552.7 M941.6,1552.7 L941.7,1547.0 M958.3,1568.9 L966.4,1574.1 L979.1,1577.3 L976.4,1585.7 M941.1,1544.2 L945.1,1541.5 L941.4,1532.4 L940.8,1526.4 L936.5,1523.0 M927.5,1530.2 L927.1,1523.9 L920.3,1522.8 L936.2,1522.0 M902.6,1548.4 L904.4,1542.8 L908.1,1534.9 L914.1,1524.2 L919.2,1522.8 M977.3,1622.0 L994.1,1621.3 L1002.0,1620.9 L998.0,1612.4 M994.9,1620.9 L993.0,1631.4 L988.6,1639.8 L979.8,1639.4 M1002.0,1620.9 L1007.0,1629.1 L1012.7,1636.7 L1017.7,1648.3 M983.0,1651.0 L988.6,1639.8 L1007.0,1651.4 L1012.3,1651.8 L1018.3,1654.1 M1006.7,1702.8 L1016.5,1699.1 L1022.4,1696.3 L1034.3,1692.2 L1043.3,1677.2 L1041.2,1671.2 M978.0,1636.7 L979.7,1650.2 M984.1,1598.5 L1002.1,1605.6 L1008.6,1604.1 M997.9,1579.3 L1003.3,1571.8 L1018.8,1574.1 L1031.9,1572.8 L1039.6,1561.4 L1058.0,1563.3 L1066.7,1561.7 L1081.1,1573.4 L1089.3,1572.8 L1103.1,1579.0 M1020.8,1603.4 L1029.5,1605.9 L1032.1,1591.1 L1040.1,1595.0 L1053.6,1598.8 L1064.7,1607.0 L1068.8,1602.4 L1076.9,1599.2 L1093.9,1600.6 L1091.1,1592.9 L1096.5,1591.1 L1095.7,1585.0 L1102.1,1585.7 L1103.1,1579.0 M1026.6,1620.5 L1035.6,1617.2 L1048.5,1623.1 L1057.8,1620.9 L1067.2,1620.9 L1073.0,1619.8 L1078.1,1622.4 L1086.9,1620.5 M1048.5,1623.1 L1050.4,1636.7 L1056.1,1645.2 L1059.8,1667.2 M1086.9,1620.5 L1079.0,1625.4 L1079.8,1632.9 L1076.5,1636.7 L1077.9,1644.4 L1071.0,1650.2 L1056.9,1649.1 M1029.8,1605.9 L1039.8,1602.4 L1055.9,1614.3 L1065.9,1619.4 M1064.7,1607.0 L1072.6,1609.9 L1080.6,1612.8 L1086.9,1620.5 M1103.1,1579.0 L1112.3,1583.0 L1138.7,1600.9 L1164.6,1604.9 L1177.7,1598.8 L1181.6,1586.0 L1192.8,1586.0 L1175.8,1576.0 L1158.0,1578.3 L1125.0,1569.6 L1107.8,1575.0 L1103.1,1579.0 M1192.8,1586.0 L1177.6,1565.5 L1207.0,1577.7 L1220.9,1583.7 L1228.5,1581.6 L1233.3,1592.9 L1233.4,1600.6 M1221.5,1611.0 L1224.2,1604.5 L1230.2,1602.0 L1233.3,1602.0 M1086.9,1620.5 L1097.6,1627.2 L1104.3,1638.6 L1113.0,1647.5 L1136.5,1656.5 L1148.2,1656.9 L1163.3,1654.9 M1163.3,1654.9 L1170.7,1668.0 L1183.6,1682.8 L1197.6,1678.0 L1203.2,1682.0 M1180.2,1686.5 L1178.2,1700.4 L1184.0,1729.3 M1183.6,1682.8 L1183.9,1698.3 L1201.2,1708.6 L1193.9,1721.0 M1192.5,1676.0 L1194.9,1692.2 L1207.8,1710.6 L1204.9,1722.2 M1155.5,1682.0 L1156.7,1672.0 L1158.0,1660.0 L1163.3,1654.9 M1188.7,1743.9 L1194.6,1746.9 M1226.5,1618.7 L1235.5,1615.7 M1111.8,1653.0 L1122.7,1658.5 L1138.0,1662.0 M651.1,1721.8 L648.5,1740.2 L663.6,1745.2 L663.7,1762.8 L655.4,1788.8 M685.6,1736.4 L686.9,1750.2 L674.2,1754.4 L663.7,1762.8 M627.2,1765.3 L638.5,1771.2 L655.4,1788.8 M623.0,1785.5 L630.1,1780.9 L638.5,1775.0 M655.4,1788.8 L646.6,1802.6 L648.9,1812.7 L658.9,1817.2 L661.6,1823.5 L660.7,1837.9 L661.3,1844.5 L659.2,1847.4 M661.6,1823.5 L671.4,1813.1 L689.1,1828.4 L695.7,1839.2 L698.7,1847.0 L697.8,1856.3 L685.4,1863.6 L672.4,1865.6 L661.3,1844.5 M672.4,1865.6 L671.1,1882.4 L670.3,1898.0 L673.8,1913.3 L675.9,1931.8 L680.3,1946.0 L684.9,1961.4 L690.8,1971.2 L700.6,1973.8 M685.4,1863.6 L700.8,1876.4 L711.6,1876.8 L715.0,1882.8 L705.9,1894.9 L720.9,1908.3 M697.8,1856.3 L711.6,1876.8 M695.8,1746.0 L692.9,1763.6 M705.8,1746.9 L703.9,1761.5 M589.8,1710.6 L594.0,1699.5 L601.2,1697.1 M599.6,1704.9 L602.8,1715.2 M617.9,1708.6 L608.5,1724.3 M534.9,1638.6 L542.2,1637.9 L550.8,1643.2 L559.0,1643.2 L564.7,1641.3 L567.4,1649.8 L571.0,1652.2 L576.5,1649.1 L579.4,1658.1 L584.4,1664.4 M553.7,1579.3 L626.8,1579.3 L639.4,1582.6 L649.7,1587.7 L653.4,1591.8 L649.0,1601.6 L646.9,1603.4 L659.8,1598.8 L668.0,1595.3 L673.9,1592.9 L682.5,1592.9 L688.9,1587.0 L692.0,1584.7 L695.0,1585.0 L693.4,1590.5 L694.4,1593.6 M573.1,1521.7 L542.3,1544.8 L546.3,1548.4 L553.9,1547.0 L554.3,1549.8 L552.8,1557.2 L552.3,1560.2" fill="none" stroke="#3a3a3b" stroke-width="1.1" stroke-linejoin="round" opacity="0.9"/>
</svg>
<div style="position:absolute;left:1343px;top:1475px;width:49px;height:2px;background:#f76b15"></div>
<div style="position:absolute;left:1524px;top:1558px;width:1036px;height:80px;background:#221e1c"></div>
<div style="position:absolute;left:1524px;top:1654px;width:219px;height:80px;background:#221e1c"></div>
<div style="position:absolute;left:1524px;top:1750px;width:175px;height:80px;background:#221e1c"></div>
<div style="position:absolute;left:1524px;top:1846px;width:56px;height:80px;background:#221e1c"></div>
<svg style="position:absolute;left:1524.00px;top:1582.00px;" width="32" height="32" viewBox="0 0 24 24" fill="none" stroke="#a1a1aa" stroke-width="2" stroke-linecap="round" stroke-linejoin="round"><rect width="14" height="20" x="5" y="2" rx="2" ry="2"/><path d="M12 18h.01"/></svg>
<svg style="position:absolute;left:1524.00px;top:1678.00px;" width="32" height="32" viewBox="0 0 24 24" fill="none" stroke="#a1a1aa" stroke-width="2" stroke-linecap="round" stroke-linejoin="round"><rect width="20" height="14" x="2" y="3" rx="2"/><line x1="8" x2="16" y1="21" y2="21"/><line x1="12" x2="12" y1="17" y2="21"/></svg>
<svg style="position:absolute;left:1524.00px;top:1774.00px;" width="32" height="32" viewBox="0 0 24 24" fill="none" stroke="#a1a1aa" stroke-width="2" stroke-linecap="round" stroke-linejoin="round"><path d="M18 5a2 2 0 0 1 2 2v8.526a2 2 0 0 0 .212.897l1.068 2.127a1 1 0 0 1-.9 1.45H3.62a1 1 0 0 1-.9-1.45l1.068-2.127A2 2 0 0 0 4 15.526V7a2 2 0 0 1 2-2z"/><path d="M20.054 15.987H3.946"/></svg>
<svg style="position:absolute;left:1524.00px;top:1870.00px;" width="32" height="32" viewBox="0 0 24 24" fill="none" stroke="#a1a1aa" stroke-width="2" stroke-linecap="round" stroke-linejoin="round"><rect width="16" height="20" x="4" y="2" rx="2" ry="2"/><line x1="12" x2="12.01" y1="18" y2="18"/></svg>
<div class=card style="left:306px;top:2072px;width:1136px;height:528px"></div>
<div class=card style="left:1474px;top:2072px;width:1136px;height:528px"></div>
<div style="position:absolute;left:2751px;top:2092px;width:195px;height:80px;border-radius:40px;background:linear-gradient(90deg,#e9b418,#f2731a);box-shadow:0 5px 12px rgba(240,120,20,0.32)"></div>
<svg style="position:absolute;left:2782.70px;top:2116.10px;" width="32" height="32" viewBox="0 0 24 24" fill="none" stroke="#fafafa" stroke-width="2" stroke-linecap="round" stroke-linejoin="round"><path d="M11.017 2.814a1 1 0 0 1 1.966 0l1.051 5.558a2 2 0 0 0 1.594 1.594l5.558 1.051a1 1 0 0 1 0 1.966l-5.558 1.051a2 2 0 0 0-1.594 1.594l-1.051 5.558a1 1 0 0 1-1.966 0l-1.051-5.558a2 2 0 0 0-1.594-1.594l-5.558-1.051a1 1 0 0 1 0-1.966l5.558-1.051a2 2 0 0 0 1.594-1.594z"/><path d="M20 2v4"/><path d="M22 4h-4"/><circle cx="4" cy="20" r="2"/></svg>
<div class=t style="left:395.18px;top:43.67px;font-size:37px;font-weight:700;font-style:normal;color:#fafafa;letter-spacing:0.000px;transform:scaleX(0.9122);transform-origin:0 0;">Dashboard</div>
<div class=t style="left:2554.22px;top:45.02px;font-size:29.5px;font-weight:700;font-style:normal;color:#fafafa;letter-spacing:0.000px;transform:scaleX(0.7778);transform-origin:0 0;">E</div>
<div class=t style="left:378.50px;top:205.45px;font-size:29px;font-weight:400;font-style:normal;color:#fafafa;letter-spacing:0.419px;">docs.insforge.dev</div>
<div class=t style="left:752.00px;top:205.65px;font-size:29px;font-weight:400;font-style:normal;color:#fafafa;letter-spacing:0.281px;">4 current visitors</div>
<div class=t style="left:2075.00px;top:205.87px;font-size:28.5px;font-weight:400;font-style:normal;color:#fafafa;letter-spacing:0.792px;-webkit-text-stroke:0.40px #fafafa;">Filter</div>
<div class=t style="left:2252.00px;top:205.45px;font-size:29px;font-weight:400;font-style:normal;color:#fafafa;letter-spacing:0.279px;-webkit-text-stroke:0.15px #fafafa;">Jan 01 - Jan 25, 2026</div>
<div class=t style="left:372.62px;top:346.03px;font-size:25px;font-weight:400;font-style:normal;color:#f76b15;letter-spacing:1.600px;transform:scaleX(0.8792);transform-origin:0 0;-webkit-text-stroke:0.60px #f76b15;">UNIQUE VISITORS</div>
<div class=t style="left:752.90px;top:346.03px;font-size:25px;font-weight:400;font-style:normal;color:#a1a1aa;letter-spacing:1.600px;transform:scaleX(0.8800);transform-origin:0 0;-webkit-text-stroke:0.60px #a1a1aa;">TOTAL PAGEVIEWS</div>
<div class=t style="left:1130.55px;top:346.03px;font-size:25px;font-weight:400;font-style:normal;color:#a1a1aa;letter-spacing:1.600px;transform:scaleX(0.8766);transform-origin:0 0;-webkit-text-stroke:0.60px #a1a1aa;">RETURN RATE</div>
<div class=t style="left:1511.70px;top:346.03px;font-size:25px;font-weight:400;font-style:normal;color:#a1a1aa;letter-spacing:1.600px;transform:scaleX(0.8709);transform-origin:0 0;-webkit-text-stroke:0.60px #a1a1aa;">AVERAGE ACTIVE TIME</div>
<div class=t style="left:370.61px;top:389.87px;font-size:50px;font-weight:700;font-style:normal;color:#fafafa;letter-spacing:0.000px;transform:scaleX(0.9644);transform-origin:0 0;">11.4k</div>
<div class=t style="left:750.50px;top:389.87px;font-size:50px;font-weight:700;font-style:normal;color:#fafafa;letter-spacing:0.000px;transform:scaleX(1.0015);transform-origin:0 0;">16.9k</div>
<div class=t style="left:1131.25px;top:389.87px;font-size:50px;font-weight:700;font-style:normal;color:#fafafa;letter-spacing:0.000px;transform:scaleX(1.0495);transform-origin:0 0;">34%</div>
<div class=t style="left:1511.70px;top:389.87px;font-size:50px;font-weight:700;font-style:normal;color:#fafafa;letter-spacing:0.000px;transform:scaleX(1.0611);transform-origin:0 0;">43s</div>
<div class=t style="left:533.70px;top:408.26px;font-size:24.5px;font-weight:400;font-style:normal;color:#46a758;letter-spacing:1.074px;">8%</div>
<div class=t style="left:920.70px;top:408.26px;font-size:24.5px;font-weight:400;font-style:normal;color:#46a758;letter-spacing:0.974px;">20%</div>
<div class=t style="left:1282.70px;top:408.26px;font-size:24.5px;font-weight:400;font-style:normal;color:#46a758;letter-spacing:0.674px;">5%</div>
<div class=t style="left:1641.70px;top:408.26px;font-size:24.5px;font-weight:400;font-style:normal;color:#46a758;letter-spacing:-0.176px;">12%</div>
<div class=t style="left:380.19px;top:586.13px;font-size:25px;font-weight:400;font-style:normal;color:#a1a1aa;letter-spacing:0.000px;">600</div>
<div class=t style="left:380.19px;top:740.13px;font-size:25px;font-weight:400;font-style:normal;color:#a1a1aa;letter-spacing:0.000px;">450</div>
<div class=t style="left:380.19px;top:894.13px;font-size:25px;font-weight:400;font-style:normal;color:#a1a1aa;letter-spacing:0.000px;">300</div>
<div class=t style="left:380.19px;top:1048.13px;font-size:25px;font-weight:400;font-style:normal;color:#a1a1aa;letter-spacing:0.000px;">150</div>
<div class=t style="left:408.00px;top:1202.13px;font-size:25px;font-weight:400;font-style:normal;color:#a1a1aa;letter-spacing:0.000px;">0</div>
<div class=t style="left:420.58px;top:1237.83px;font-size:25px;font-weight:400;font-style:normal;color:#a1a1aa;letter-spacing:0.000px;">Apr 1</div>
<div class=t style="left:565.47px;top:1237.83px;font-size:25px;font-weight:400;font-style:normal;color:#a1a1aa;letter-spacing:0.000px;">Apr 3</div>
<div class=t style="left:710.37px;top:1237.83px;font-size:25px;font-weight:400;font-style:normal;color:#a1a1aa;letter-spacing:0.000px;">Apr 5</div>
<div class=t style="left:855.26px;top:1237.83px;font-size:25px;font-weight:400;font-style:normal;color:#a1a1aa;letter-spacing:0.000px;">Apr 7</div>
<div class=t style="left:1000.16px;top:1237.83px;font-size:25px;font-weight:400;font-style:normal;color:#a1a1aa;letter-spacing:0.000px;">Apr 9</div>
<div class=t style="left:1139.03px;top:1237.83px;font-size:25px;font-weight:400;font-style:normal;color:#a1a1aa;letter-spacing:0.000px;">Apr 11</div>
<div class=t style="left:1283.00px;top:1237.83px;font-size:25px;font-weight:400;font-style:normal;color:#a1a1aa;letter-spacing:0.000px;">Apr 13</div>
<div class=t style="left:1427.90px;top:1237.83px;font-size:25px;font-weight:400;font-style:normal;color:#a1a1aa;letter-spacing:0.000px;">Apr 15</div>
<div class=t style="left:1572.80px;top:1237.83px;font-size:25px;font-weight:400;font-style:normal;color:#a1a1aa;letter-spacing:0.000px;">Apr 17</div>
<div class=t style="left:1717.69px;top:1237.83px;font-size:25px;font-weight:400;font-style:normal;color:#a1a1aa;letter-spacing:0.000px;">Apr 19</div>
<div class=t style="left:1862.59px;top:1237.83px;font-size:25px;font-weight:400;font-style:normal;color:#a1a1aa;letter-spacing:0.000px;">Apr 21</div>
<div class=t style="left:2007.49px;top:1237.83px;font-size:25px;font-weight:400;font-style:normal;color:#a1a1aa;letter-spacing:0.000px;">Apr 23</div>
<div class=t style="left:2152.38px;top:1237.83px;font-size:25px;font-weight:400;font-style:normal;color:#a1a1aa;letter-spacing:0.000px;">Apr 25</div>
<div class=t style="left:2297.28px;top:1237.83px;font-size:25px;font-weight:400;font-style:normal;color:#a1a1aa;letter-spacing:0.000px;">Apr 27</div>
<div class=t style="left:2478.25px;top:1237.83px;font-size:25px;font-weight:400;font-style:normal;color:#a1a1aa;letter-spacing:0.000px;">Apr 30</div>
<div class=t style="left:356.66px;top:1443.45px;font-size:29px;font-weight:700;font-style:normal;color:#fafafa;letter-spacing:0.300px;transform:scaleX(0.9379);transform-origin:0 0;">Locations</div>
<div class=t style="left:1342.80px;top:1445.83px;font-size:25px;font-weight:400;font-style:normal;color:#a1a1aa;letter-spacing:0.135px;">Map</div>
<div class=t style="left:356.60px;top:1932.02px;font-size:21px;font-weight:400;font-style:italic;color:#9a9aa2;letter-spacing:0.425px;">Hover over a highlighted country for details</div>
<div class=t style="left:1523.33px;top:1444.45px;font-size:29px;font-weight:700;font-style:normal;color:#fafafa;letter-spacing:0.300px;transform:scaleX(0.9669);transform-origin:0 0;">Devices</div>
<div class=t style="left:1523.90px;top:1514.03px;font-size:25px;font-weight:400;font-style:normal;color:#a1a1aa;letter-spacing:0.239px;">Screen size</div>
<div class=t style="left:2473.30px;top:1514.03px;font-size:25px;font-weight:400;font-style:normal;color:#a1a1aa;letter-spacing:0.671px;">Visitors</div>
<div class=t style="left:1571.60px;top:1583.45px;font-size:29px;font-weight:400;font-style:normal;color:#fafafa;letter-spacing:0.300px;">Mobile</div>
<div class=t style="left:2399.30px;top:1583.02px;font-size:29.5px;font-weight:400;font-style:normal;color:#fafafa;letter-spacing:0.621px;-webkit-text-stroke:0.40px #fafafa;">92.3k</div>
<div class=t style="left:2491.70px;top:1587.18px;font-size:24px;font-weight:400;font-style:normal;color:#a1a1aa;letter-spacing:0.618px;">(87%)</div>
<div class=t style="left:1570.40px;top:1679.45px;font-size:29px;font-weight:400;font-style:normal;color:#fafafa;letter-spacing:0.491px;">Desktop</div>
<div class=t style="left:2405.70px;top:1679.02px;font-size:29.5px;font-weight:400;font-style:normal;color:#fafafa;letter-spacing:-0.204px;-webkit-text-stroke:0.40px #fafafa;">19.5k</div>
<div class=t style="left:2494.60px;top:1683.18px;font-size:24px;font-weight:400;font-style:normal;color:#a1a1aa;letter-spacing:0.168px;">(21%)</div>
<div class=t style="left:1570.40px;top:1775.45px;font-size:29px;font-weight:400;font-style:normal;color:#fafafa;letter-spacing:0.686px;">Laptop</div>
<div class=t style="left:2407.30px;top:1775.02px;font-size:29.5px;font-weight:400;font-style:normal;color:#fafafa;letter-spacing:-0.604px;-webkit-text-stroke:0.40px #fafafa;">15.6k</div>
<div class=t style="left:2495.60px;top:1779.18px;font-size:24px;font-weight:400;font-style:normal;color:#a1a1aa;letter-spacing:-0.082px;">(17%)</div>
<div class=t style="left:1572.40px;top:1871.45px;font-size:29px;font-weight:400;font-style:normal;color:#fafafa;letter-spacing:0.034px;">Tablet</div>
<div class=t style="left:2455.30px;top:1871.02px;font-size:29.5px;font-weight:400;font-style:normal;color:#fafafa;letter-spacing:0.994px;-webkit-text-stroke:0.40px #fafafa;">5k</div>
<div class=t style="left:2505.00px;top:1875.18px;font-size:24px;font-weight:400;font-style:normal;color:#a1a1aa;letter-spacing:1.207px;">(8%)</div>
<div class=t style="left:357.40px;top:2127.85px;font-size:29px;font-weight:700;font-style:normal;color:#fafafa;letter-spacing:0.300px;transform:scaleX(0.9360);transform-origin:0 0;">Top Source</div>
<div class=t style="left:356.40px;top:2197.83px;font-size:25px;font-weight:400;font-style:normal;color:#a1a1aa;letter-spacing:0.238px;">Source</div>
<div class=t style="left:1305.30px;top:2197.83px;font-size:25px;font-weight:400;font-style:normal;color:#a1a1aa;letter-spacing:0.671px;">Visitors</div>
<div class=t style="left:1524.00px;top:2127.85px;font-size:29px;font-weight:700;font-style:normal;color:#fafafa;letter-spacing:0.300px;transform:scaleX(0.9644);transform-origin:0 0;">Top pages</div>
<div class=t style="left:1522.00px;top:2197.83px;font-size:25px;font-weight:400;font-style:normal;color:#a1a1aa;letter-spacing:0.506px;">Page</div>
<div class=t style="left:2473.90px;top:2197.83px;font-size:25px;font-weight:400;font-style:normal;color:#a1a1aa;letter-spacing:0.671px;">Visitors</div>
<div class=t style="left:2832.00px;top:2118.09px;font-size:28px;font-weight:400;font-style:normal;color:#fafafa;letter-spacing:0.314px;-webkit-text-stroke:0.50px #fafafa;">Ask AI</div>
</body></html>
